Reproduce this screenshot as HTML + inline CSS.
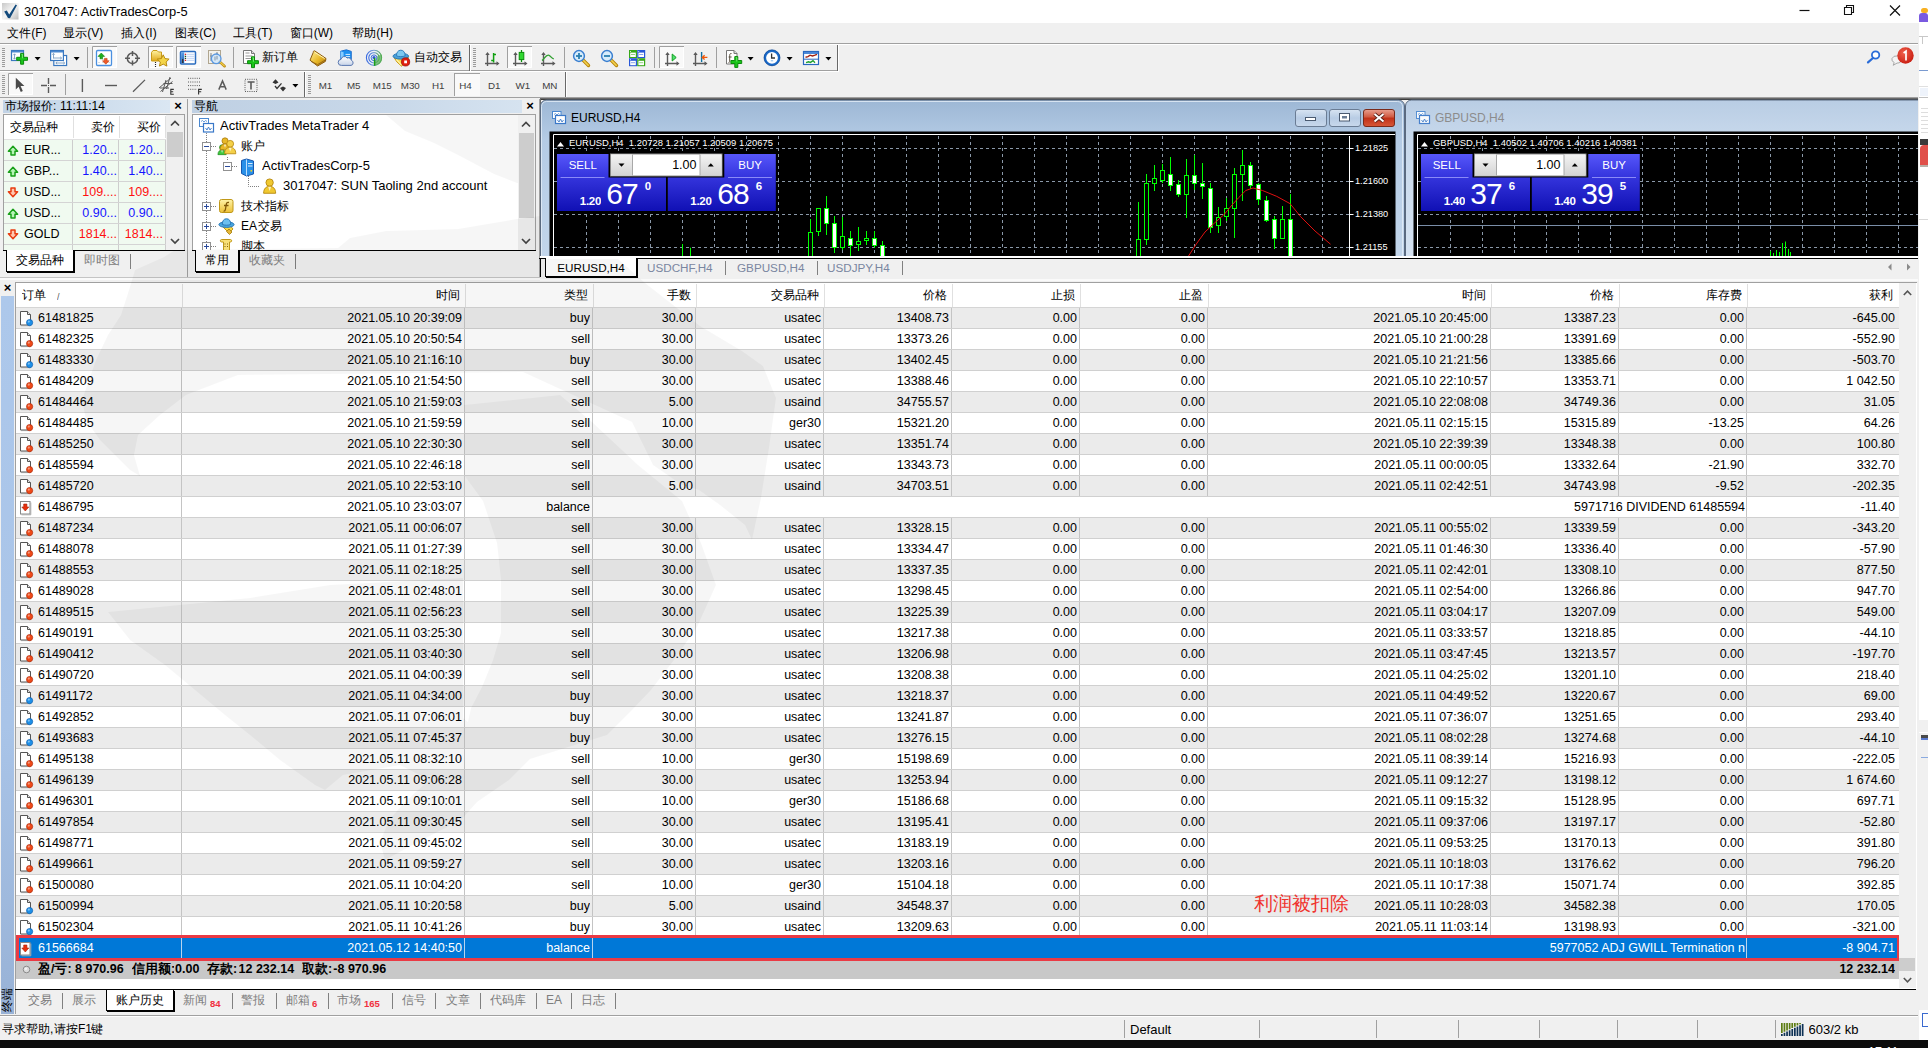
<!DOCTYPE html><html><head><meta charset="utf-8"><title>3017047: ActivTradesCorp-5</title><style>
html,body{margin:0;padding:0;}
body{width:1928px;height:1048px;overflow:hidden;background:#f0f0f0;position:relative;
 font-family:"Liberation Sans",sans-serif;font-size:12.5px;color:#000;}
div,svg{position:absolute;box-sizing:border-box;white-space:nowrap;overflow:hidden;}
svg{overflow:visible;}
.r{text-align:right;}
.c{text-align:center;}
.g{color:#7d7d7d;}
.w{color:#fff;}
.b{font-weight:bold;}
</style></head><body>
<div style="left:0px;top:0px;width:1919px;height:23px;background:#fff;"></div>
<svg style="left:2px;top:3px;" width="17" height="17" viewBox="0 0 17 17"><defs><linearGradient id="ig" x1="0" y1="0" x2="1" y2="1"><stop offset="0" stop-color="#c9c9c9"/><stop offset=".5" stop-color="#f4f4f4"/><stop offset="1" stop-color="#bdbdbd"/></linearGradient></defs><rect x="0" y="0" width="16.5" height="16.5" fill="url(#ig)"/><path d="M2.2 8.6l2.6-1.2 2.4 4.2L13.6 1.6l1.4.6L8 15.2 6 15z" fill="#134a7c"/></svg>
<div style="left:24px;top:1px;width:400px;height:21px;line-height:21px;font-size:12.9px;">3017047: ActivTradesCorp-5</div>
<svg style="left:1795px;top:0px;" width="120" height="23" viewBox="0 0 120 23"><path d="M4.5 10.5h10" stroke="#111" stroke-width="1.2"/><path d="M49.5 7.5h7v7h-7zM51.5 7.5v-2h7v7h-2" fill="none" stroke="#111" stroke-width="1.1"/><path d="M95 5.5l10 10M105 5.5l-10 10" stroke="#111" stroke-width="1.2"/></svg>
<div style="left:0px;top:23px;width:1919px;height:20px;background:#f0f0f0;"></div>
<div style="left:7px;top:23px;width:24px;height:20px;line-height:20px;font-size:12px;">文件</div>
<div style="left:31.3px;top:23px;width:30px;height:20px;line-height:20px;font-size:12px;">(F)</div>
<div style="left:63px;top:23px;width:24px;height:20px;line-height:20px;font-size:12px;">显示</div>
<div style="left:87.3px;top:23px;width:30px;height:20px;line-height:20px;font-size:12px;">(V)</div>
<div style="left:121px;top:23px;width:24px;height:20px;line-height:20px;font-size:12px;">插入</div>
<div style="left:145.3px;top:23px;width:30px;height:20px;line-height:20px;font-size:12px;">(I)</div>
<div style="left:175px;top:23px;width:24px;height:20px;line-height:20px;font-size:12px;">图表</div>
<div style="left:199.3px;top:23px;width:30px;height:20px;line-height:20px;font-size:12px;">(C)</div>
<div style="left:233px;top:23px;width:24px;height:20px;line-height:20px;font-size:12px;">工具</div>
<div style="left:257.3px;top:23px;width:30px;height:20px;line-height:20px;font-size:12px;">(T)</div>
<div style="left:289.5px;top:23px;width:24px;height:20px;line-height:20px;font-size:12px;">窗口</div>
<div style="left:313.8px;top:23px;width:30px;height:20px;line-height:20px;font-size:12px;">(W)</div>
<div style="left:352px;top:23px;width:24px;height:20px;line-height:20px;font-size:12px;">帮助</div>
<div style="left:376.3px;top:23px;width:30px;height:20px;line-height:20px;font-size:12px;">(H)</div>
<div style="left:0px;top:43px;width:1919px;height:1px;background:#a0a0a0;"></div>
<div style="left:0px;top:44px;width:1919px;height:1px;background:#fff;"></div>
<div style="left:0px;top:70px;width:838px;height:1px;background:#a0a0a0;"></div>
<div style="left:0px;top:71px;width:838px;height:1px;background:#fff;"></div>
<div style="left:469px;top:45px;width:1px;height:26px;background:#696969;"></div>
<div style="left:470px;top:45px;width:1px;height:26px;background:#fff;"></div>
<div style="left:837px;top:45px;width:1px;height:26px;background:#696969;"></div>
<div style="left:838px;top:45px;width:1px;height:27px;background:#fff;"></div>
<div style="left:0px;top:97px;width:1919px;height:1px;background:#a0a0a0;"></div>
<div style="left:304px;top:72px;width:1px;height:25px;background:#696969;"></div>
<div style="left:305px;top:72px;width:1px;height:25px;background:#fff;"></div>
<div style="left:565px;top:72px;width:1px;height:25px;background:#696969;"></div>
<div style="left:566px;top:72px;width:1px;height:25px;background:#fff;"></div>
<svg style="left:0px;top:0px;" width="1928" height="100" viewBox="0 0 1928 100"><defs><linearGradient id="gold" x1="0" y1="0" x2="0" y2="1"><stop offset="0" stop-color="#fff3a0"/><stop offset="1" stop-color="#e0a818"/></linearGradient><linearGradient id="blu" x1="0" y1="0" x2="0" y2="1"><stop offset="0" stop-color="#5aa0e8"/><stop offset="1" stop-color="#1c5cb0"/></linearGradient></defs><rect x="2" y="48" width="3" height="1" fill="#9a9a9a"/><rect x="2" y="50" width="3" height="1" fill="#9a9a9a"/><rect x="2" y="52" width="3" height="1" fill="#9a9a9a"/><rect x="2" y="54" width="3" height="1" fill="#9a9a9a"/><rect x="2" y="56" width="3" height="1" fill="#9a9a9a"/><rect x="2" y="58" width="3" height="1" fill="#9a9a9a"/><rect x="2" y="60" width="3" height="1" fill="#9a9a9a"/><rect x="2" y="62" width="3" height="1" fill="#9a9a9a"/><rect x="2" y="64" width="3" height="1" fill="#9a9a9a"/><rect x="2" y="66" width="3" height="1" fill="#9a9a9a"/><rect x="11.5" y="50.5" width="12" height="10" fill="#fff" stroke="#3a78c0" stroke-width="1.2"/><rect x="12" y="51" width="11" height="1.5" fill="#4a88d0"/><path d="M14.5 54v5M13.3 55.2l1.2-1.4 1.2 1.4M13.3 57.8l1.2 1.4 1.2-1.4" stroke="#7a9cc0" stroke-width=".9" fill="none"/><path d="M20.6 53.4h3.0v3.9000000000000004h3.9000000000000004v3.0h-3.9000000000000004v3.9000000000000004h-3.0v-3.9000000000000004h-3.9000000000000004v-3.0h3.9000000000000004z" fill="#19c519" stroke="#0a8a0a" stroke-width="1"/><path d="M21.6 54.4h1.0v3.9000000000000004" fill="none" stroke="#8cf08c" stroke-width="1" opacity=".8"/><path d="M34.6 57h6l-3 3.4z" fill="#000"/><rect x="53.8" y="55.5" width="12.8" height="10" fill="#fff" stroke="#3a78c0" stroke-width="1.2"/><rect x="50.6" y="50.5" width="12.8" height="10" fill="#fff" stroke="#3a78c0" stroke-width="1.2"/><rect x="51" y="51" width="12" height="1.5" fill="#4a88d0"/><path d="M53.5 53.5v5M52.3 54.7l1.2-1.4 1.2 1.4M53.5 58h8M60.2 56.8l1.4 1.2-1.4 1.2M56 63h8.5M57.2 61.8L55.8 63l1.4 1.2M63.3 61.8l1.4 1.2-1.4 1.2" stroke="#7a9cc0" stroke-width=".9" fill="none"/><path d="M73.6 57h6l-3 3.4z" fill="#000"/><rect x="87" y="47" width="1" height="21" fill="#a0a0a0"/><rect x="92" y="46" width="25" height="22" fill="#f9f9f9"/><path d="M92.5 68V46.5H117" fill="none" stroke="#a0a0a0" stroke-width="1"/><path d="M116.5 47V67.5H93" fill="none" stroke="#fff" stroke-width="1"/><rect x="96.5" y="50.5" width="15" height="15" rx="1.2" fill="#fff" stroke="#4a90e0" stroke-width="1.3"/><path d="M102 62.5h8M102 59.5h2M98 62.5h2" stroke="#ddd" stroke-width="1"/><path d="M101.3 53l3.3 3.4h-2v2.4h-2.6v-2.4h-2z" fill="#1eb01e" stroke="#0c800c" stroke-width=".6"/><path d="M105.8 64.2l-3.3-3.4h2v-2.4h2.6v2.4h2z" fill="#f05a28" stroke="#c03c10" stroke-width=".6"/><circle cx="132.5" cy="58.3" r="5.2" fill="none" stroke="#5a5a5a" stroke-width="1.5"/><path d="M132.5 51v5M132.5 60.6v5M125 58.3h5M135 58.3h5" stroke="#5a5a5a" stroke-width="1.5"/><rect x="148" y="46" width="25" height="22" fill="#f9f9f9"/><path d="M148.5 68V46.5H173" fill="none" stroke="#a0a0a0" stroke-width="1"/><path d="M172.5 47V67.5H149" fill="none" stroke="#fff" stroke-width="1"/><path d="M151.5 52.5l1.5-2h4l1.5 1.5h3v9h-10z" fill="url(#gold)" stroke="#c89a18" stroke-width="1"/><path d="M155.5 62v1M155.5 64v1M155.5 66v1" stroke="#222" stroke-width="1.1"/><path d="M163.2 54.8l1.8 3.8 4.1.5-3 2.9.8 4.1-3.7-2-3.7 2 .8-4.1-3-2.9 4.1-.5z" fill="#f4d548" stroke="#b88a10" stroke-width="1"/><rect x="176" y="46" width="25" height="22" fill="#f9f9f9"/><path d="M176.5 68V46.5H201" fill="none" stroke="#a0a0a0" stroke-width="1"/><path d="M200.5 47V67.5H177" fill="none" stroke="#fff" stroke-width="1"/><rect x="180.5" y="51.5" width="15" height="12.5" rx="1" fill="#fff" stroke="#2a6cc0" stroke-width="1.5"/><rect x="181.2" y="52.2" width="3" height="11" fill="url(#blu)"/><rect x="182" y="59" width="1.3" height="4" fill="#333"/><path d="M186.5 54.3h8M186.5 56.3h8M186.5 58.3h8M186.5 60.3h8" stroke="#bcd2f4" stroke-width="1"/><rect x="184.8" y="53.7" width="1.3" height="1.3" fill="#e02020"/><rect x="184.8" y="55.7" width="1.3" height="1.3" fill="#205020"/><rect x="184.8" y="57.7" width="1.3" height="1.3" fill="#205020"/><rect x="184.8" y="59.7" width="1.3" height="1.3" fill="#e02020"/><rect x="208.5" y="50.5" width="12" height="13" fill="#f4f2ec" stroke="#b0a690" stroke-width="1"/><path d="M211 53v8M217 52v7M210 56h2M216 54h2" stroke="#808890" stroke-width="1"/><path d="M219.6 61.6l5 4.6" stroke="#b8860b" stroke-width="2.6" stroke-linecap="round"/><path d="M220 62l4.4 4" stroke="#f0cc4a" stroke-width="1.1" stroke-linecap="round"/><circle cx="216.2" cy="58.8" r="4.8" fill="#cfe6fa" fill-opacity=".85" stroke="#5a98e0" stroke-width="1.3"/><path d="M215 56.5v4M217 56v3.5" stroke="#9ab" stroke-width="1.3"/><rect x="233" y="47" width="1" height="21" fill="#a0a0a0"/><path d="M243.5 50.5h8l3 3v10h-11z" fill="#fff" stroke="#777" stroke-width="1"/><path d="M251.5 50.5v3h3" fill="#ddd" stroke="#777" stroke-width="1"/><path d="M245.5 53h4M245.5 56h7M245.5 58.5h7" stroke="#999" stroke-width="1.1"/><path d="M251.5 56.800000000000004h3.0v3.9000000000000004h3.9000000000000004v3.0h-3.9000000000000004v3.9000000000000004h-3.0v-3.9000000000000004h-3.9000000000000004v-3.0h3.9000000000000004z" fill="#19c519" stroke="#0a8a0a" stroke-width="1"/><path d="M252.5 57.800000000000004h1.0v3.9000000000000004" fill="none" stroke="#8cf08c" stroke-width="1" opacity=".8"/><defs><linearGradient id="bk" x1="0" y1="0" x2="1" y2="1"><stop offset="0" stop-color="#fff2a0"/><stop offset=".55" stop-color="#e8b828"/><stop offset="1" stop-color="#b07808"/></linearGradient><linearGradient id="sg" x1="0" y1="0" x2="1" y2="0"><stop offset="0" stop-color="#3a6ae0"/><stop offset=".5" stop-color="#7aa0d8"/><stop offset="1" stop-color="#48a848"/></linearGradient><linearGradient id="cl" x1="0" y1="0" x2="0" y2="1"><stop offset="0" stop-color="#ffffff"/><stop offset="1" stop-color="#c8d4e8"/></linearGradient></defs><path d="M314.6 50.8c-1.200 0-1.600 1-1.400 1.800L310 60.200l7.600 5.800 7.800-4.600.6-2.900z" fill="url(#bk)" stroke="#8a5a10" stroke-width="1"/><path d="M311 61.400l6.600 3.200 7.400-4.400" fill="none" stroke="#8a5a10" stroke-width=".8"/><path d="M315 52.500l9.600 6" fill="none" stroke="#fff6c0" stroke-width="1"/><path d="M340.600 51.200l5.800-1.400 4.900 1.600v8.200h-10.700z" fill="#1e90f0" stroke="#1868c8" stroke-width=".9"/><path d="M340.600 51.200l3 1v7.400h-3z" fill="#86ccff"/><path d="M345.500 54.400h4.600M345.500 56.600h4.600" stroke="#d8efff" stroke-width="1"/><path d="M341.400 65.400a3 3 0 0 1-.4-6 3.400 3.400 0 0 1 6.200-1.300 3 3 0 0 1 4.200 2.300 2.600 2.600 0 0 1-.4 5z" fill="url(#cl)" stroke="#5a78b0" stroke-width="1"/><circle cx="374" cy="57.800" r="7.600" fill="#eef2f8" fill-opacity=".7" stroke="url(#sg)" stroke-width="1.100"/><circle cx="374" cy="57.800" r="5.200" fill="none" stroke="url(#sg)" stroke-width="1.100"/><path d="M374.600 57.800L381 54.500a7.600 7.600 0 0 1-6.400 11.200z" fill="#58b058" fill-opacity=".75"/><circle cx="374" cy="57.800" r="2.900" fill="#dfe8f6" stroke="#4a78d8" stroke-width="1"/><circle cx="374" cy="57.600" r="1.500" fill="#2a58d0"/><path d="M374.600 58v7.800" stroke="#18a018" stroke-width="1.500"/><path d="M394 57.500h14.500l-2.500 4.500-4.500 4.200-4.500-4.200z" fill="#f8d848" stroke="#c89818" stroke-width="1"/><path d="M396.500 59.500l5 5.500" stroke="#fff4a8" stroke-width="1.200"/><ellipse cx="400.800" cy="56.200" rx="7.800" ry="2.900" fill="#4aa0d8" stroke="#2878b8" stroke-width="1"/><path d="M396.400 55.800c.2-3.200 1.400-5.600 4.400-5.600s4.200 2.400 4.400 5.600c-2.300 1.100-6.500 1.100-8.800 0z" fill="#7cc8f0" stroke="#2878b8" stroke-width=".9"/><circle cx="405.600" cy="61.900" r="4.100" fill="#e02010" stroke="#a01008" stroke-width=".8"/><rect x="404.200" y="60.500" width="2.800" height="2.800" fill="#fff"/><rect x="473" y="48" width="3" height="1" fill="#9a9a9a"/><rect x="473" y="50" width="3" height="1" fill="#9a9a9a"/><rect x="473" y="52" width="3" height="1" fill="#9a9a9a"/><rect x="473" y="54" width="3" height="1" fill="#9a9a9a"/><rect x="473" y="56" width="3" height="1" fill="#9a9a9a"/><rect x="473" y="58" width="3" height="1" fill="#9a9a9a"/><rect x="473" y="60" width="3" height="1" fill="#9a9a9a"/><rect x="473" y="62" width="3" height="1" fill="#9a9a9a"/><rect x="473" y="64" width="3" height="1" fill="#9a9a9a"/><rect x="473" y="66" width="3" height="1" fill="#9a9a9a"/><path d="M487.5 66V53.5M485 63.5H498" stroke="#5a5a5a" stroke-width="1.4" fill="none"/><path d="M487.5 52l-2.2 3h4.4zM499.5 63.5l-3-2.2v4.4z" fill="#5a5a5a"/><path d="M493.6 53v9.400M493.600 54.400h2.400M491.200 60.600h2.400" stroke="#10a010" stroke-width="1.5" fill="none"/><rect x="507" y="46" width="25" height="22" fill="#f9f9f9"/><path d="M507.5 68V46.5H532" fill="none" stroke="#a0a0a0" stroke-width="1"/><path d="M531.5 47V67.5H508" fill="none" stroke="#fff" stroke-width="1"/><path d="M515.5 66V53.5M513 63.5H526" stroke="#5a5a5a" stroke-width="1.4" fill="none"/><path d="M515.5 52l-2.2 3h4.4zM527.5 63.5l-3-2.2v4.4z" fill="#5a5a5a"/><path d="M521.5 50v12" stroke="#0a900a" stroke-width="1.3"/><rect x="519.2" y="52.4" width="4.600" height="7.200" fill="#30d830" stroke="#0a900a" stroke-width="1"/><path d="M543.5 66V53.5M541 63.5H554" stroke="#5a5a5a" stroke-width="1.4" fill="none"/><path d="M543.5 52l-2.2 3h4.4zM555.5 63.5l-3-2.2v4.4z" fill="#5a5a5a"/><path d="M542 60.500c2-1 3.600-5.600 6.400-5.400 2 .2 3 3.400 5.400 3.800" stroke="#30a030" stroke-width="1.400" fill="none"/><rect x="564" y="47" width="1" height="21" fill="#a0a0a0"/><path d="M582.5 59.5l6 6" stroke="#b8860b" stroke-width="3.4" stroke-linecap="round"/><path d="M582.8 59.8l5.4 5.4" stroke="#f3d250" stroke-width="1.6" stroke-linecap="round"/><circle cx="579" cy="56" r="5.4" fill="#d7ecfb" stroke="#3a7fd0" stroke-width="1.5"/><path d="M576 56h6" stroke="#2a7fb0" stroke-width="1.8"/><path d="M579 53v6" stroke="#2a7fb0" stroke-width="1.8"/><path d="M610.5 59.5l6 6" stroke="#b8860b" stroke-width="3.4" stroke-linecap="round"/><path d="M610.8 59.8l5.4 5.4" stroke="#f3d250" stroke-width="1.6" stroke-linecap="round"/><circle cx="607" cy="56" r="5.4" fill="#d7ecfb" stroke="#3a7fd0" stroke-width="1.5"/><path d="M604 56h6" stroke="#2a7fb0" stroke-width="1.8"/><rect x="629" y="50" width="8" height="8" fill="#38a818"/><rect x="630.2" y="52.6" width="5.600" height="4.400" fill="#fff"/><rect x="631" y="54" width="4" height="1" fill="#38a818" opacity=".55"/><rect x="630" y="51" width="1" height="1" fill="#fff" opacity=".8"/><rect x="637.2" y="50" width="8" height="8" fill="#2858d8"/><rect x="638.4000000000001" y="52.6" width="5.600" height="4.400" fill="#fff"/><rect x="639.2" y="54" width="4" height="1" fill="#2858d8" opacity=".55"/><rect x="638.2" y="51" width="1" height="1" fill="#fff" opacity=".8"/><rect x="629" y="58.2" width="8" height="8" fill="#2858d8"/><rect x="630.2" y="60.800000000000004" width="5.600" height="4.400" fill="#fff"/><rect x="631" y="62.2" width="4" height="1" fill="#2858d8" opacity=".55"/><rect x="630" y="59.2" width="1" height="1" fill="#fff" opacity=".8"/><rect x="637.2" y="58.2" width="8" height="8" fill="#38a818"/><rect x="638.4000000000001" y="60.800000000000004" width="5.600" height="4.400" fill="#fff"/><rect x="639.2" y="62.2" width="4" height="1" fill="#38a818" opacity=".55"/><rect x="638.2" y="59.2" width="1" height="1" fill="#fff" opacity=".8"/><rect x="654" y="47" width="1" height="21" fill="#a0a0a0"/><rect x="659" y="46" width="25" height="22" fill="#f9f9f9"/><path d="M659.5 68V46.5H684" fill="none" stroke="#a0a0a0" stroke-width="1"/><path d="M683.5 47V67.5H660" fill="none" stroke="#fff" stroke-width="1"/><path d="M667.5 66V53.5M665 63.5H678" stroke="#5a5a5a" stroke-width="1.4" fill="none"/><path d="M667.5 52l-2.2 3h4.4zM679.5 63.5l-3-2.2v4.4z" fill="#5a5a5a"/><path d="M672.200 54v7l4-3.500z" fill="#50e070" stroke="#10a020" stroke-width="1"/><path d="M695.5 66V53.5M693 63.5H706" stroke="#5a5a5a" stroke-width="1.4" fill="none"/><path d="M695.5 52l-2.2 3h4.4zM707.5 63.5l-3-2.2v4.4z" fill="#5a5a5a"/><path d="M701.600 52v10" stroke="#1070a0" stroke-width="1.400"/><path d="M707.400 57.400h-5M704.600 55.200l-2.400 2.200 2.400 2.200" stroke="#f05808" stroke-width="1.300" fill="none"/><rect x="716" y="47" width="1" height="21" fill="#a0a0a0"/><path d="M726.500 50.500h7.500l3 3v10.500h-10.500z" fill="#fff" stroke="#777" stroke-width="1"/><path d="M734 50.500v3h3" fill="#ddd" stroke="#777" stroke-width="1"/><path d="M731.500 53.500c-1.600-.2-1.800.8-1.800 2v5.500c0 1-.2 1.600-1.200 1.600M728.600 57h3" stroke="#5a5040" stroke-width="1" fill="none"/><path d="M734.8 56.6h3.0v3.9000000000000004h3.9000000000000004v3.0h-3.9000000000000004v3.9000000000000004h-3.0v-3.9000000000000004h-3.9000000000000004v-3.0h3.9000000000000004z" fill="#19c519" stroke="#0a8a0a" stroke-width="1"/><path d="M735.8 57.6h1.0v3.9000000000000004" fill="none" stroke="#8cf08c" stroke-width="1" opacity=".8"/><path d="M747.6 57h6l-3 3.4z" fill="#000"/><circle cx="772" cy="57.800" r="7" fill="#fff" stroke="#1868c8" stroke-width="2.200"/><circle cx="772" cy="57.800" r="8" fill="none" stroke="#0a408a" stroke-width=".6"/><path d="M771.600 53.600v4.400h3.400" stroke="#333" stroke-width="1.300" fill="none"/><path d="M770.800 60.800h2.400" stroke="#80b8f0" stroke-width="1"/><path d="M786.6 57h6l-3 3.4z" fill="#000"/><rect x="803.500" y="51.500" width="15" height="13" fill="#fff" stroke="#2a68c0" stroke-width="1.200"/><rect x="804" y="52" width="14" height="2" fill="#4a88d8"/><path d="M804 59.200h14" stroke="#2a68c0" stroke-width="1"/><path d="M805.500 57.200l2.500-.6 2-1.400 2.500.8 2.500-.8 2-.8" stroke="#a02010" stroke-width="1.400" fill="none"/><path d="M806 62.600l2.500-.800 2 .6 2.500-1.800 2 2.200" stroke="#20a030" stroke-width="1.400" fill="none"/><path d="M825.4 57h6l-3 3.4z" fill="#000"/><circle cx="1875.600" cy="55" r="3.700" fill="#fff" stroke="#2a6cd8" stroke-width="1.800"/><path d="M1873 58l-5 4.400" stroke="#2a6cd8" stroke-width="2.200" stroke-linecap="round"/><path d="M1892 58.500a5 3.600 0 1 1 5 4.600l-3.800 2.200 1-2.800a5 3.600 0 0 1-2.200-4z" fill="#f4f4f4" stroke="#a8a8a8" stroke-width="1"/><defs><radialGradient id="rb" cx=".4" cy=".35" r=".7"><stop offset="0" stop-color="#f0604c"/><stop offset="1" stop-color="#c81c10"/></radialGradient></defs><circle cx="1905.500" cy="55.500" r="8.200" fill="url(#rb)"/><path d="M1903.600 53l2.400-1.800v9.200" stroke="#fff" stroke-width="1.700" fill="none"/><rect x="2" y="75" width="3" height="1" fill="#9a9a9a"/><rect x="2" y="77" width="3" height="1" fill="#9a9a9a"/><rect x="2" y="79" width="3" height="1" fill="#9a9a9a"/><rect x="2" y="81" width="3" height="1" fill="#9a9a9a"/><rect x="2" y="83" width="3" height="1" fill="#9a9a9a"/><rect x="2" y="85" width="3" height="1" fill="#9a9a9a"/><rect x="2" y="87" width="3" height="1" fill="#9a9a9a"/><rect x="2" y="89" width="3" height="1" fill="#9a9a9a"/><rect x="2" y="91" width="3" height="1" fill="#9a9a9a"/><rect x="2" y="93" width="3" height="1" fill="#9a9a9a"/><rect x="8" y="73" width="25" height="22" fill="#f9f9f9"/><path d="M8.5 95V73.5H33" fill="none" stroke="#a0a0a0" stroke-width="1"/><path d="M32.5 74V94.5H9" fill="none" stroke="#fff" stroke-width="1"/><path d="M15.800 77.800v11.600l2.800-2.600 2.200 5.200 2-.9-2.200-5 3.800-.2z" fill="#4a4a4a"/><path d="M48.500 78v6M48.500 87v6M41 85.500h6M50 85.500h6" stroke="#5a5a5a" stroke-width="1.400"/><rect x="48" y="85" width="1" height="1" fill="#5a5a5a"/><rect x="65" y="74" width="1" height="21" fill="#a0a0a0"/><path d="M82.400 79v13" stroke="#5a5a5a" stroke-width="1.400"/><path d="M105 85.500h12" stroke="#5a5a5a" stroke-width="1.400"/><path d="M133 91.800L145 79.900" stroke="#5a5a5a" stroke-width="1.300"/><path d="M159 88l12-10M160.500 91.500l12-10M162.500 92l3.500-12M166.500 89l3.500-12M160 88h9M163.500 83.500h9" stroke="#5a5a5a" stroke-width="1" fill="none"/><path d="M173.800 89.400h-3v4.800h3M170.800 91.800h2.400" stroke="#333" stroke-width="1.100" fill="none"/><path d="M188 78.3h13" stroke="#5a5a5a" stroke-width="1" stroke-dasharray="1 1.200"/><path d="M188 82h13" stroke="#5a5a5a" stroke-width="1" stroke-dasharray="1 1.200"/><path d="M188 85.6h13" stroke="#5a5a5a" stroke-width="1" stroke-dasharray="1 1.200"/><path d="M188 89.3h9" stroke="#5a5a5a" stroke-width="1" stroke-dasharray="1 1.200"/><path d="M201.800 89.400h-3.200v5M198.600 91.800h2.600" stroke="#333" stroke-width="1.100" fill="none"/><path d="M218.800 89.600l3.700-8.600 3.700 8.600M220.200 86.800h4.600" stroke="#5a5a5a" stroke-width="1.500" fill="none"/><rect x="245" y="79.300" width="12" height="12.200" fill="none" stroke="#5a5a5a" stroke-width="1" stroke-dasharray="1 1.200"/><path d="M247.600 82h7M251 82v7.600" stroke="#5a5a5a" stroke-width="1.600" fill="none"/><path d="M272.500 82.500l3-3.200 3 3.200-3 1.600zM280 88l3-1.600 3 1.600-3 3.400z" fill="#333"/><path d="M275 86l2 2.400 4.500-5" stroke="#333" stroke-width="1.300" fill="none"/><path d="M292.4 84h6l-3 3.4z" fill="#000"/><rect x="308" y="75" width="3" height="1" fill="#9a9a9a"/><rect x="308" y="77" width="3" height="1" fill="#9a9a9a"/><rect x="308" y="79" width="3" height="1" fill="#9a9a9a"/><rect x="308" y="81" width="3" height="1" fill="#9a9a9a"/><rect x="308" y="83" width="3" height="1" fill="#9a9a9a"/><rect x="308" y="85" width="3" height="1" fill="#9a9a9a"/><rect x="308" y="87" width="3" height="1" fill="#9a9a9a"/><rect x="308" y="89" width="3" height="1" fill="#9a9a9a"/><rect x="308" y="91" width="3" height="1" fill="#9a9a9a"/><rect x="308" y="93" width="3" height="1" fill="#9a9a9a"/></svg>
<div style="left:262px;top:46px;width:60px;height:22px;line-height:22px;font-size:12px;">新订单</div>
<div style="left:414px;top:46px;width:60px;height:22px;line-height:22px;font-size:11.700px;">自动交易</div>
<div style="left:454px;top:73px;width:26px;height:23px;background:#f9f9f9;border-top:1px solid #a0a0a0;border-left:1px solid #a0a0a0;"></div>
<div style="left:309px;top:75px;width:33px;height:21px;line-height:21px;font-size:9.800px;color:#404040;text-align:center;">M1</div>
<div style="left:337px;top:75px;width:33.5px;height:21px;line-height:21px;font-size:9.800px;color:#404040;text-align:center;">M5</div>
<div style="left:363px;top:75px;width:38.5px;height:21px;line-height:21px;font-size:9.800px;color:#404040;text-align:center;">M15</div>
<div style="left:391px;top:75px;width:38.5px;height:21px;line-height:21px;font-size:9.800px;color:#404040;text-align:center;">M30</div>
<div style="left:422px;top:75px;width:32.6px;height:21px;line-height:21px;font-size:9.800px;color:#404040;text-align:center;">H1</div>
<div style="left:449px;top:75px;width:33px;height:21px;line-height:21px;font-size:9.800px;color:#404040;text-align:center;">H4</div>
<div style="left:478px;top:75px;width:32.6px;height:21px;line-height:21px;font-size:9.800px;color:#404040;text-align:center;">D1</div>
<div style="left:505px;top:75px;width:35.5px;height:21px;line-height:21px;font-size:9.800px;color:#404040;text-align:center;">W1</div>
<div style="left:532px;top:75px;width:35.5px;height:21px;line-height:21px;font-size:9.800px;color:#404040;text-align:center;">MN</div>
<div style="left:0px;top:99px;width:1919px;height:183px;background:#f0f0f0;"></div>
<div style="left:3px;top:100px;width:167px;height:13px;background:linear-gradient(90deg,#c2d3e6,#cfdeed 60%,#dbe7f3);"></div>
<div style="left:5px;top:99px;width:52px;height:14px;line-height:14px;font-size:12px;">市场报价:</div>
<div style="left:60px;top:99px;width:60px;height:14px;line-height:14px;font-size:12px;">11:11:14</div>
<div style="left:171px;top:98px;width:14px;height:15px;line-height:15px;font-size:13px;font-weight:bold;text-align:center;">×</div>
<div style="left:187px;top:99px;width:1px;height:180px;background:#a0a0a0;"></div>
<div style="left:3px;top:114px;width:182px;height:137px;background:#fff;border:1px solid #a0a0a0;border-bottom:none;"></div>
<div style="left:4px;top:115px;width:162px;height:25px;background:#fff;border-bottom:1px solid #e0e0e0;"></div>
<div style="left:10px;top:116px;width:60px;height:22px;line-height:22px;font-size:12px;">交易品种</div>
<div class="r" style="left:74px;top:116px;width:41px;height:22px;line-height:22px;font-size:12px;">卖价</div>
<div class="r" style="left:120px;top:116px;width:41px;height:22px;line-height:22px;font-size:12px;">买价</div>
<div style="left:73px;top:116px;width:1px;height:22px;background:#e0e0e0;"></div>
<div style="left:119px;top:116px;width:1px;height:22px;background:#e0e0e0;"></div>
<div style="left:165px;top:116px;width:1px;height:22px;background:#e0e0e0;"></div>
<div style="left:4px;top:140px;width:162px;height:21px;background:#f0faf0;border-bottom:1px solid #d4d4d4;"></div>
<div style="left:24px;top:140px;width:48px;height:20px;line-height:20px;font-size:12.500px;">EUR...</div>
<div class="r" style="left:74px;top:140px;width:43px;height:20px;line-height:20px;font-size:12.500px;color:#1414ff;">1.20...</div>
<div class="r" style="left:120px;top:140px;width:43px;height:20px;line-height:20px;font-size:12.500px;color:#1414ff;">1.20...</div>
<div style="left:72px;top:140px;width:1px;height:20px;background:#cdcdcd;"></div>
<div style="left:118px;top:140px;width:1px;height:20px;background:#cdcdcd;"></div>
<div style="left:165px;top:140px;width:1px;height:20px;background:#cdcdcd;"></div>
<div style="left:4px;top:161px;width:162px;height:21px;background:#f0faf0;border-bottom:1px solid #d4d4d4;"></div>
<div style="left:24px;top:161px;width:48px;height:20px;line-height:20px;font-size:12.500px;">GBP...</div>
<div class="r" style="left:74px;top:161px;width:43px;height:20px;line-height:20px;font-size:12.500px;color:#1414ff;">1.40...</div>
<div class="r" style="left:120px;top:161px;width:43px;height:20px;line-height:20px;font-size:12.500px;color:#1414ff;">1.40...</div>
<div style="left:72px;top:161px;width:1px;height:20px;background:#cdcdcd;"></div>
<div style="left:118px;top:161px;width:1px;height:20px;background:#cdcdcd;"></div>
<div style="left:165px;top:161px;width:1px;height:20px;background:#cdcdcd;"></div>
<div style="left:4px;top:182px;width:162px;height:21px;background:#f0faf0;border-bottom:1px solid #d4d4d4;"></div>
<div style="left:24px;top:182px;width:48px;height:20px;line-height:20px;font-size:12.500px;">USD...</div>
<div class="r" style="left:74px;top:182px;width:43px;height:20px;line-height:20px;font-size:12.500px;color:#ff1010;">109....</div>
<div class="r" style="left:120px;top:182px;width:43px;height:20px;line-height:20px;font-size:12.500px;color:#ff1010;">109....</div>
<div style="left:72px;top:182px;width:1px;height:20px;background:#cdcdcd;"></div>
<div style="left:118px;top:182px;width:1px;height:20px;background:#cdcdcd;"></div>
<div style="left:165px;top:182px;width:1px;height:20px;background:#cdcdcd;"></div>
<div style="left:4px;top:203px;width:162px;height:21px;background:#f0faf0;border-bottom:1px solid #d4d4d4;"></div>
<div style="left:24px;top:203px;width:48px;height:20px;line-height:20px;font-size:12.500px;">USD...</div>
<div class="r" style="left:74px;top:203px;width:43px;height:20px;line-height:20px;font-size:12.500px;color:#1414ff;">0.90...</div>
<div class="r" style="left:120px;top:203px;width:43px;height:20px;line-height:20px;font-size:12.500px;color:#1414ff;">0.90...</div>
<div style="left:72px;top:203px;width:1px;height:20px;background:#cdcdcd;"></div>
<div style="left:118px;top:203px;width:1px;height:20px;background:#cdcdcd;"></div>
<div style="left:165px;top:203px;width:1px;height:20px;background:#cdcdcd;"></div>
<div style="left:4px;top:224px;width:162px;height:21px;background:#f0faf0;border-bottom:1px solid #d4d4d4;"></div>
<div style="left:24px;top:224px;width:48px;height:20px;line-height:20px;font-size:12.500px;">GOLD</div>
<div class="r" style="left:74px;top:224px;width:43px;height:20px;line-height:20px;font-size:12.500px;color:#ff1010;">1814...</div>
<div class="r" style="left:120px;top:224px;width:43px;height:20px;line-height:20px;font-size:12.500px;color:#ff1010;">1814...</div>
<div style="left:72px;top:224px;width:1px;height:20px;background:#cdcdcd;"></div>
<div style="left:118px;top:224px;width:1px;height:20px;background:#cdcdcd;"></div>
<div style="left:165px;top:224px;width:1px;height:20px;background:#cdcdcd;"></div>
<div style="left:4px;top:245px;width:162px;height:5px;background:#f0faf0;"></div>
<div style="left:72px;top:245px;width:1px;height:5px;background:#cdcdcd;"></div>
<div style="left:118px;top:245px;width:1px;height:5px;background:#cdcdcd;"></div>
<div style="left:165px;top:245px;width:1px;height:5px;background:#cdcdcd;"></div>
<div style="left:166px;top:115px;width:18px;height:135px;background:#f0f0f0;"></div>
<div style="left:167px;top:132px;width:16px;height:25px;background:#cdcdcd;"></div>
<svg style="left:0px;top:0px;" width="190" height="260" viewBox="0 0 190 260"><path d="M13 146.3l4.600 5h-2.600v3.700h-4v-3.700h-2.600z" fill="#b8f4b8" stroke="#18a018" stroke-width="1.500" stroke-linejoin="round"/><path d="M13 167.3l4.600 5h-2.600v3.700h-4v-3.700h-2.600z" fill="#b8f4b8" stroke="#18a018" stroke-width="1.500" stroke-linejoin="round"/><path d="M13 196.7l4.600-5h-2.600v-3.700h-4v3.700h-2.600z" fill="#ffc8b0" stroke="#e83c10" stroke-width="1.500" stroke-linejoin="round"/><path d="M13 209.3l4.600 5h-2.600v3.700h-4v-3.700h-2.600z" fill="#b8f4b8" stroke="#18a018" stroke-width="1.500" stroke-linejoin="round"/><path d="M13 238.7l4.600-5h-2.600v-3.700h-4v3.700h-2.600z" fill="#ffc8b0" stroke="#e83c10" stroke-width="1.500" stroke-linejoin="round"/><path d="M171 125.5l4-4 4 4" fill="none" stroke="#444" stroke-width="1.700"/><path d="M171 239l4 4 4-4" fill="none" stroke="#444" stroke-width="1.700"/></svg>
<div style="left:3px;top:250px;width:182px;height:1px;background:#000;"></div>
<div style="left:6px;top:250px;width:68px;height:22px;background:#fff;border:1px solid #000;border-top:none;box-shadow:1px 1px 0 #000;"></div>
<div style="left:6px;top:250px;width:68px;height:21px;line-height:21px;font-size:12px;text-align:center;">交易品种</div>
<div style="left:84px;top:250px;width:40px;height:21px;line-height:21px;font-size:12px;color:#808080;">即时图</div>
<div style="left:130px;top:254px;width:1px;height:15px;background:#808080;"></div>
<div style="left:192px;top:100px;width:330px;height:13px;background:linear-gradient(90deg,#bfd0e3,#c8d8e9 60%,#d6e3f0);"></div>
<div style="left:194px;top:99px;width:60px;height:14px;line-height:14px;font-size:12px;">导航</div>
<div style="left:523px;top:98px;width:14px;height:15px;line-height:15px;font-size:13px;font-weight:bold;text-align:center;">×</div>
<div style="left:192px;top:114px;width:344px;height:137px;background:#fff;border:1px solid #a0a0a0;border-bottom:none;"></div>
<div style="left:518px;top:115px;width:17px;height:135px;background:#f0f0f0;"></div>
<div style="left:519px;top:133px;width:15px;height:85px;background:#cdcdcd;"></div>
<div style="left:539px;top:99px;width:1px;height:180px;background:#a0a0a0;"></div>
<svg style="left:0px;top:0px;clip-path:inset(0 0 0 0);" width="545" height="250" viewBox="0 0 545 250"><path d="M522 126.5l4-4 4 4" fill="none" stroke="#444" stroke-width="1.700"/><path d="M522 239l4 4 4-4" fill="none" stroke="#444" stroke-width="1.700"/><path d="M206.500 133v120M211 146.500h6M211 206.500h6M211 226.500h6M211 246.500h6M227.500 157v4M232 166.500h6M248.500 176v10.500h11" stroke="#808080" stroke-width="1" stroke-dasharray="1 1" fill="none"/><rect x="202.5" y="142.5" width="8" height="8" fill="#fff" stroke="#919191" stroke-width="1"/><path d="M204 146.5h5" stroke="#2a4a9a" stroke-width="1"/><rect x="223.5" y="162.5" width="8" height="8" fill="#fff" stroke="#919191" stroke-width="1"/><path d="M225 166.5h5" stroke="#2a4a9a" stroke-width="1"/><rect x="202.5" y="202.5" width="8" height="8" fill="#fff" stroke="#919191" stroke-width="1"/><path d="M204 206.5h5" stroke="#2a4a9a" stroke-width="1"/><path d="M206.5 204v5" stroke="#2a4a9a" stroke-width="1"/><rect x="202.5" y="222.5" width="8" height="8" fill="#fff" stroke="#919191" stroke-width="1"/><path d="M204 226.5h5" stroke="#2a4a9a" stroke-width="1"/><path d="M206.5 224v5" stroke="#2a4a9a" stroke-width="1"/><rect x="202.5" y="242.5" width="8" height="8" fill="#fff" stroke="#919191" stroke-width="1"/><path d="M204 246.5h5" stroke="#2a4a9a" stroke-width="1"/><path d="M206.5 244v5" stroke="#2a4a9a" stroke-width="1"/><rect x="199.500" y="118.500" width="9" height="8" fill="#fff" stroke="#4a88d0" stroke-width="1"/><path d="M201 121.500l1.500-1 1.500 1.500 1.500-1.500 1.500 1" stroke="#4a88d0" stroke-width=".8" fill="none"/><rect x="203.500" y="123.500" width="10" height="8.500" fill="#fff" stroke="#3a78c8" stroke-width="1.200"/><path d="M205.500 128l1.500 2 1.500-3 1.500 3 1.500-2" stroke="#3a78c8" stroke-width=".9" fill="none"/><g transform="translate(217.5 144.5) scale(0.7)"><circle cx="6.500" cy="4" r="3.600" fill="#40c840" stroke="#108010" stroke-width=".9"/><path d="M.6 14.500c0-4.500 2.400-6.800 5.900-6.800s5.900 2.300 5.900 6.800z" fill="#40c840" stroke="#108010" stroke-width=".9"/><path d="M5 8.200l1.500 4 1.500-4" fill="#fff" opacity=".7"/></g><g transform="translate(219.5 137.5) scale(0.85)"><circle cx="6.500" cy="4" r="3.600" fill="#e8b828" stroke="#a87808" stroke-width=".9"/><path d="M.6 14.500c0-4.500 2.400-6.800 5.900-6.800s5.900 2.300 5.900 6.800z" fill="#e8b828" stroke="#a87808" stroke-width=".9"/><path d="M5 8.200l1.500 4 1.500-4" fill="#fff" opacity=".7"/></g><g transform="translate(224 140) scale(0.95)"><circle cx="6.500" cy="4" r="3.600" fill="#f4d048" stroke="#b88a10" stroke-width=".9"/><path d="M.6 14.500c0-4.500 2.400-6.800 5.900-6.800s5.900 2.300 5.900 6.800z" fill="#f4d048" stroke="#b88a10" stroke-width=".9"/><path d="M5 8.200l1.500 4 1.500-4" fill="#fff" opacity=".7"/></g><path d="M241.500 160.500l5-1.500 7 2v13l-7 2-5-2.500z" fill="#2a90e8" stroke="#1858b0" stroke-width="1"/><path d="M246.500 159.500v16" stroke="#bfe0ff" stroke-width="1"/><path d="M248 163.500h4.500M248 166h4.500" stroke="#d8ecff" stroke-width="1"/><rect x="250.500" y="170" width="1.600" height="1.600" fill="#f0d020"/><g transform="translate(263 178.5) scale(1.02)"><circle cx="6.500" cy="4" r="3.600" fill="#f0c830" stroke="#b88a10" stroke-width=".9"/><path d="M.6 14.500c0-4.500 2.400-6.800 5.900-6.800s5.900 2.300 5.900 6.800z" fill="#f0c830" stroke="#b88a10" stroke-width=".9"/><path d="M5 8.200l1.500 4 1.500-4" fill="#fff" opacity=".7"/></g><defs><linearGradient id="fy" x1="0" y1="0" x2="0" y2="1"><stop offset="0" stop-color="#fff4a8"/><stop offset="1" stop-color="#ecc038"/></linearGradient></defs><rect x="219.500" y="199.500" width="13.500" height="13" rx="2" fill="url(#fy)" stroke="#c09818" stroke-width="1"/><path d="M229 202.500c-2.200-.6-2.600.8-2.800 2.400l-.8 4.600c-.2 1.200-.6 1.800-1.800 1.600M224 205.500h4.500" stroke="#805808" stroke-width="1.300" fill="none"/><path d="M222 226l7 7 4-4-3-3.500z" fill="#f8d848" stroke="#c09818" stroke-width="1"/><path d="M226.500 231.500l3 3 2.500-2.500-3-3z" fill="#e8b838" stroke="#a07808" stroke-width=".8"/><ellipse cx="226.5" cy="224.6" rx="7.6" ry="2.8" fill="#4aa8e0" stroke="#2878b8" stroke-width="1"/><path d="M222.2 224.400c.2-3.200 1.300-5.600 4.300-5.600s4.100 2.400 4.300 5.600c-2.200 1.100-6.400 1.100-8.600 0z" fill="#6cc0f0" stroke="#2878b8" stroke-width="1"/><path d="M221.500 239.500h9c1.500 0 1.500 2.500 0 2.500h-1v8.500h-6v-8.500h-2c-1.500 0-1.500-2.500 0-2.500z" fill="#f8e078" stroke="#c09818" stroke-width="1"/><path d="M224.500 244h1M227 244h1M224.500 246.500h1M227 246.500h1" stroke="#806010" stroke-width="1"/></svg>
<div style="left:220px;top:115px;width:260px;height:21px;line-height:21px;font-size:13px;">ActivTrades MetaTrader 4</div>
<div style="left:241px;top:136px;width:100px;height:21px;line-height:21px;font-size:12px;">账户</div>
<div style="left:262px;top:155px;width:200px;height:21px;line-height:21px;font-size:13px;">ActivTradesCorp-5</div>
<div style="left:283px;top:175px;width:240px;height:21px;line-height:21px;font-size:13px;">3017047: SUN Taoling 2nd account</div>
<div style="left:241px;top:196px;width:100px;height:21px;line-height:21px;font-size:12px;">技术指标</div>
<div style="left:241px;top:216px;width:17px;height:21px;line-height:21px;font-size:12px;">EA</div>
<div style="left:257.5px;top:216px;width:30px;height:21px;line-height:21px;font-size:12px;">交易</div>
<div style="left:241px;top:238px;width:100px;height:12px;line-height:12px;font-size:12px;line-height:17px;">脚本</div>
<div style="left:192px;top:250px;width:344px;height:1px;background:#000;"></div>
<div style="left:195px;top:250px;width:44px;height:22px;background:#fff;border:1px solid #000;border-top:none;box-shadow:1px 1px 0 #000;"></div>
<div style="left:195px;top:250px;width:44px;height:21px;line-height:21px;font-size:12px;text-align:center;">常用</div>
<div style="left:249px;top:250px;width:40px;height:21px;line-height:21px;font-size:12px;color:#808080;">收藏夹</div>
<div style="left:295px;top:254px;width:1px;height:15px;background:#808080;"></div>
<div style="left:0px;top:277px;width:540px;height:1px;background:#c4c4c4;"></div>
<div style="left:0px;top:278px;width:540px;height:2px;background:#fafafa;"></div>
<div style="left:540px;top:279px;width:1379px;height:2px;background:#fafafa;"></div>
<div style="left:540px;top:99px;width:1379px;height:160px;background:#f0f0f0;"></div>
<div style="left:540px;top:98px;width:1379px;height:1px;background:#696969;"></div>
<div style="left:540px;top:99px;width:1379px;height:1px;background:#3c3c3c;"></div>
<div style="left:540px;top:98px;width:1px;height:161px;background:#696969;"></div>
<svg style="left:0px;top:0px;clip-path:inset(0 0 0 0);" width="1919" height="280" viewBox="0 0 1919 280"><defs><linearGradient id="frm" x1="0" y1="0" x2="0" y2="1"><stop offset="0" stop-color="#9db7d5"/><stop offset=".25" stop-color="#b4cbe5"/><stop offset="1" stop-color="#c3d6eb"/></linearGradient><linearGradient id="frm2" x1="0" y1="0" x2="0" y2="1"><stop offset="0" stop-color="#b9cde4"/><stop offset=".25" stop-color="#c8d9ec"/><stop offset="1" stop-color="#d6e3f2"/></linearGradient><linearGradient id="btn" x1="0" y1="0" x2="0" y2="1"><stop offset="0" stop-color="#5656fa"/><stop offset="1" stop-color="#3232dc"/></linearGradient><linearGradient id="prc" x1="0" y1="0" x2="0" y2="1"><stop offset="0" stop-color="#3434dc"/><stop offset="1" stop-color="#1010b4"/></linearGradient><linearGradient id="spn" x1="0" y1="0" x2="0" y2="1"><stop offset="0" stop-color="#f4f4f4"/><stop offset="1" stop-color="#d4d4d4"/></linearGradient><linearGradient id="wb" x1="0" y1="0" x2="0" y2="1"><stop offset="0" stop-color="#d8e4f2"/><stop offset=".5" stop-color="#b8cce4"/><stop offset="1" stop-color="#c8d8ec"/></linearGradient><linearGradient id="wr" x1="0" y1="0" x2="0" y2="1"><stop offset="0" stop-color="#e8a090"/><stop offset=".45" stop-color="#d05840"/><stop offset=".5" stop-color="#c03018"/><stop offset="1" stop-color="#d85838"/></linearGradient><clipPath id="c1"><rect x="554" y="136" width="796" height="120"/></clipPath><clipPath id="c2"><rect x="1418" y="136" width="500" height="120"/></clipPath></defs><path d="M540.500 259V106a6 6 0 0 1 6-6h852a6 6 0 0 1 6 6V259z" fill="url(#frm)" stroke="#5a6a80" stroke-width="1"/><path d="M541.500 259V106.500a5 5 0 0 1 5-5h851a5 5 0 0 1 5 5V259" fill="none" stroke="#e4eef8" stroke-width="1" opacity=".8"/><rect x="549.500" y="131.500" width="846" height="126" fill="#000"/><path d="M553.500 256V134.500H1395" fill="none" stroke="#fff" stroke-width="1"/><g opacity="1"><rect x="552.5" y="111.5" width="8.500" height="7" fill="#fff" stroke="#4a88d0" stroke-width="1"/><path d="M554 114.5l1.500-1 1.500 1.500 1.500-1.500 1 .8" stroke="#4a88d0" stroke-width=".8" fill="none"/><rect x="555.5" y="115.5" width="10" height="8" fill="#fff" stroke="#3a78c8" stroke-width="1.200"/><path d="M557.5 120l1.500 2 1.500-3 1.500 3 1.500-2" stroke="#3a78c8" stroke-width=".9" fill="none"/></g><rect x="1295.500" y="109.500" width="31" height="17" rx="2.500" fill="url(#wb)" stroke="#6a7c94" stroke-width="1"/><rect x="1329.500" y="109.500" width="31" height="17" rx="2.500" fill="url(#wb)" stroke="#6a7c94" stroke-width="1"/><rect x="1363.500" y="109.500" width="31" height="17" rx="2.500" fill="url(#wr)" stroke="#7a2a1a" stroke-width="1"/><rect x="1305.500" y="117.500" width="10" height="3" fill="#fff" stroke="#4a5a70" stroke-width="1"/><rect x="1339.500" y="113.500" width="10" height="7.500" fill="#fff" stroke="#4a5a70" stroke-width="1"/><rect x="1342" y="116" width="5" height="2.500" fill="#6a7c94"/><path d="M1374.500 114l9 7.500M1383.500 114l-9 7.500" stroke="#5a2018" stroke-width="3.600"/><path d="M1374.500 114l9 7.500M1383.500 114l-9 7.500" stroke="#fff" stroke-width="2"/><g clip-path="url(#c1)" stroke="#8a98a8" stroke-width="1" stroke-dasharray="3 3" fill="none"><path d="M586.5 136V256"/><path d="M618.5 136V256"/><path d="M650.5 136V256"/><path d="M682.5 136V256"/><path d="M714.5 136V256"/><path d="M746.5 136V256"/><path d="M778.5 136V256"/><path d="M810.5 136V256"/><path d="M842.5 136V256"/><path d="M874.5 136V256"/><path d="M906.5 136V256"/><path d="M938.5 136V256"/><path d="M970.5 136V256"/><path d="M1002.5 136V256"/><path d="M1034.5 136V256"/><path d="M1066.5 136V256"/><path d="M1098.5 136V256"/><path d="M1130.5 136V256"/><path d="M1162.5 136V256"/><path d="M1194.5 136V256"/><path d="M1226.5 136V256"/><path d="M1258.5 136V256"/><path d="M1290.5 136V256"/><path d="M1322.5 136V256"/><path d="M554 148.5H1349"/><path d="M554 181.5H1349"/><path d="M554 214.5H1349"/><path d="M554 247.5H1349"/></g><path d="M1349.500 136V256" stroke="#fff" stroke-width="1"/><path d="M1349.500 148.5h4" stroke="#fff" stroke-width="1"/><path d="M1349.500 181.5h4" stroke="#fff" stroke-width="1"/><path d="M1349.500 214.5h4" stroke="#fff" stroke-width="1"/><path d="M1349.500 247.5h4" stroke="#fff" stroke-width="1"/><g clip-path="url(#c1)"><path d="M682.500 244V256M690.500 247.700V256" stroke="#00ff00" stroke-width="1"/><path d="M810.5 219V260" stroke="#00ff00" stroke-width="1"/><rect x="808.5" y="232.5" width="4" height="30" fill="#000" stroke="#00ff00" stroke-width="1"/><path d="M818.5 208V236" stroke="#00ff00" stroke-width="1"/><rect x="816.5" y="208.5" width="4" height="23" fill="#000" stroke="#00ff00" stroke-width="1"/><path d="M826.5 196V235" stroke="#00ff00" stroke-width="1"/><rect x="824.5" y="208.5" width="4" height="15" fill="#fff" stroke="#00ff00" stroke-width="1"/><path d="M834.5 216V253" stroke="#00ff00" stroke-width="1"/><rect x="832.5" y="223.5" width="4" height="24" fill="#fff" stroke="#00ff00" stroke-width="1"/><path d="M842.5 217V250" stroke="#00ff00" stroke-width="1"/><rect x="840.5" y="236.5" width="4" height="11" fill="#000" stroke="#00ff00" stroke-width="1"/><path d="M850.5 231V260" stroke="#00ff00" stroke-width="1"/><rect x="848.5" y="238.5" width="4" height="7" fill="#fff" stroke="#00ff00" stroke-width="1"/><path d="M858.5 227V251" stroke="#00ff00" stroke-width="1"/><rect x="856.5" y="241.5" width="4" height="3" fill="#000" stroke="#00ff00" stroke-width="1"/><path d="M866.5 231V245" stroke="#00ff00" stroke-width="1"/><rect x="864.5" y="238.5" width="4" height="2" fill="#000" stroke="#00ff00" stroke-width="1"/><path d="M874.5 231V248" stroke="#00ff00" stroke-width="1"/><rect x="872.5" y="238.5" width="4" height="7" fill="#fff" stroke="#00ff00" stroke-width="1"/><path d="M882.5 241V260" stroke="#00ff00" stroke-width="1"/><rect x="880.5" y="245.5" width="4" height="17" fill="#fff" stroke="#00ff00" stroke-width="1"/><path d="M1138.5 202V260" stroke="#00ff00" stroke-width="1"/><rect x="1136.5" y="239.5" width="4" height="23" fill="#000" stroke="#00ff00" stroke-width="1"/><path d="M1146.5 174V245" stroke="#00ff00" stroke-width="1"/><rect x="1144.5" y="183.5" width="4" height="56" fill="#000" stroke="#00ff00" stroke-width="1"/><path d="M1154.5 165V191" stroke="#00ff00" stroke-width="1"/><rect x="1152.5" y="178.5" width="4" height="5" fill="#000" stroke="#00ff00" stroke-width="1"/><path d="M1162.5 164V183" stroke="#00ff00" stroke-width="1"/><rect x="1160.5" y="170.5" width="4" height="10" fill="#000" stroke="#00ff00" stroke-width="1"/><path d="M1170.5 157V191" stroke="#00ff00" stroke-width="1"/><rect x="1168.5" y="174.5" width="4" height="11" fill="#fff" stroke="#00ff00" stroke-width="1"/><path d="M1178.5 180V197" stroke="#00ff00" stroke-width="1"/><rect x="1176.5" y="184.5" width="4" height="10" fill="#fff" stroke="#00ff00" stroke-width="1"/><path d="M1186.5 159V218" stroke="#00ff00" stroke-width="1"/><rect x="1184.5" y="175.5" width="4" height="19" fill="#000" stroke="#00ff00" stroke-width="1"/><path d="M1194.5 155V190" stroke="#00ff00" stroke-width="1"/><rect x="1192.5" y="175.5" width="4" height="8" fill="#fff" stroke="#00ff00" stroke-width="1"/><path d="M1202.5 163V199" stroke="#00ff00" stroke-width="1"/><rect x="1200.5" y="183.5" width="4" height="3" fill="#fff" stroke="#00ff00" stroke-width="1"/><path d="M1210.5 183V233" stroke="#00ff00" stroke-width="1"/><rect x="1208.5" y="188.5" width="4" height="39" fill="#fff" stroke="#00ff00" stroke-width="1"/><path d="M1218.5 207V233" stroke="#00ff00" stroke-width="1"/><rect x="1216.5" y="217.5" width="4" height="8" fill="#000" stroke="#00ff00" stroke-width="1"/><path d="M1226.5 198V221" stroke="#00ff00" stroke-width="1"/><rect x="1224.5" y="208.5" width="4" height="8" fill="#000" stroke="#00ff00" stroke-width="1"/><path d="M1234.5 168V238" stroke="#00ff00" stroke-width="1"/><rect x="1232.5" y="174.5" width="4" height="34" fill="#000" stroke="#00ff00" stroke-width="1"/><path d="M1242.5 150V201" stroke="#00ff00" stroke-width="1"/><rect x="1240.5" y="165.5" width="4" height="9" fill="#000" stroke="#00ff00" stroke-width="1"/><path d="M1250.5 162V189" stroke="#00ff00" stroke-width="1"/><rect x="1248.5" y="165.5" width="4" height="20" fill="#fff" stroke="#00ff00" stroke-width="1"/><path d="M1258.5 183V205" stroke="#00ff00" stroke-width="1"/><rect x="1256.5" y="184.5" width="4" height="15" fill="#fff" stroke="#00ff00" stroke-width="1"/><path d="M1266.5 196V222" stroke="#00ff00" stroke-width="1"/><rect x="1264.5" y="200.5" width="4" height="20" fill="#fff" stroke="#00ff00" stroke-width="1"/><path d="M1274.5 216V249" stroke="#00ff00" stroke-width="1"/><rect x="1272.5" y="219.5" width="4" height="19" fill="#fff" stroke="#00ff00" stroke-width="1"/><path d="M1282.5 206V239" stroke="#00ff00" stroke-width="1"/><rect x="1280.5" y="219.5" width="4" height="19" fill="#000" stroke="#00ff00" stroke-width="1"/><path d="M1290.5 194V260" stroke="#00ff00" stroke-width="1"/><rect x="1288.5" y="219.5" width="4" height="43" fill="#fff" stroke="#00ff00" stroke-width="1"/><path d="M1188.500 256L1197 243 1205 232 1214.500 223 1224.300 214.300 1232 205 1238.700 197.600 1245.800 190.500 1253 188 1262.500 190.500 1276.800 196.400 1290 203.600 1300.700 216.700 1315 231 1330.500 244.200" fill="none" stroke="#e01010" stroke-width="1"/></g><rect x="557" y="154" width="51.500" height="24" fill="url(#btn)"/><rect x="557" y="177.500" width="109" height="33.500" fill="url(#prc)"/><rect x="667.8" y="177.500" width="108" height="33.500" fill="url(#prc)"/><rect x="724.3" y="154" width="51.500" height="24" fill="url(#btn)"/><path d="M560.5 177.500h44M728 177.500h44" stroke="#8a8af8" stroke-width="1"/><rect x="610.5" y="154" width="111.500" height="22" fill="#fff" stroke="#8a8a8a" stroke-width="1"/><rect x="611" y="154.500" width="21.500" height="21" fill="url(#spn)"/><rect x="700" y="154.500" width="21.500" height="21" fill="url(#spn)"/><path d="M632.5 154.500v21M700 154.500v21" stroke="#a8a8a8" stroke-width="1"/><path d="M618.5 163.500h6l-3 3.200z" fill="#000"/><path d="M707.8 166.500h6l-3-3.200z" fill="#000"/><path d="M557 146.500l3.500-4.500 3.500 4.500z" fill="#fff"/><path d="M1405.500 259V106a6 6 0 0 1 6-6h520V259z" fill="url(#frm2)" stroke="#5a6a80" stroke-width="1"/><rect x="1413.500" y="131.500" width="510" height="126" fill="#000"/><path d="M1417.500 256V134.500H1920" fill="none" stroke="#fff" stroke-width="1"/><g opacity="0.9"><rect x="1416.5" y="111.5" width="8.500" height="7" fill="#fff" stroke="#4a88d0" stroke-width="1"/><path d="M1418 114.5l1.500-1 1.500 1.500 1.500-1.500 1 .8" stroke="#4a88d0" stroke-width=".8" fill="none"/><rect x="1419.5" y="115.5" width="10" height="8" fill="#fff" stroke="#3a78c8" stroke-width="1.200"/><path d="M1421.5 120l1.500 2 1.500-3 1.500 3 1.500-2" stroke="#3a78c8" stroke-width=".9" fill="none"/></g><g clip-path="url(#c2)" stroke="#8a98a8" stroke-width="1" stroke-dasharray="3 3" fill="none"><path d="M1450.5 136V256"/><path d="M1482.5 136V256"/><path d="M1514.5 136V256"/><path d="M1546.5 136V256"/><path d="M1578.5 136V256"/><path d="M1610.5 136V256"/><path d="M1642.5 136V256"/><path d="M1674.5 136V256"/><path d="M1706.5 136V256"/><path d="M1738.5 136V256"/><path d="M1770.5 136V256"/><path d="M1802.5 136V256"/><path d="M1834.5 136V256"/><path d="M1866.5 136V256"/><path d="M1898.5 136V256"/><path d="M1930.5 136V256"/><path d="M1418 148.5H1920"/><path d="M1418 181.5H1920"/><path d="M1418 214.5H1920"/><path d="M1418 247.5H1920"/></g><path d="M1418 225.500H1918" stroke="#7a8ea8" stroke-width="1"/><g clip-path="url(#c2)"><path d="M1770.500 251V257M1773.500 253V257M1776.500 250V257M1779.500 252V257M1782.500 243V257M1785.500 241.500V257M1788.500 249V257M1790.500 252V257" stroke="#00ff00" stroke-width="1"/></g><rect x="1421" y="154" width="51.500" height="24" fill="url(#btn)"/><rect x="1421" y="177.500" width="109" height="33.500" fill="url(#prc)"/><rect x="1531.8" y="177.500" width="108" height="33.500" fill="url(#prc)"/><rect x="1588.3" y="154" width="51.500" height="24" fill="url(#btn)"/><path d="M1424.5 177.500h44M1592 177.500h44" stroke="#8a8af8" stroke-width="1"/><rect x="1474.5" y="154" width="111.500" height="22" fill="#fff" stroke="#8a8a8a" stroke-width="1"/><rect x="1475" y="154.500" width="21.500" height="21" fill="url(#spn)"/><rect x="1564" y="154.500" width="21.500" height="21" fill="url(#spn)"/><path d="M1496.5 154.500v21M1564 154.500v21" stroke="#a8a8a8" stroke-width="1"/><path d="M1482.5 163.500h6l-3 3.200z" fill="#000"/><path d="M1571.8 166.500h6l-3-3.200z" fill="#000"/><path d="M1421 146.500l3.500-4.500 3.500 4.500z" fill="#fff"/><rect x="540" y="256" width="1379" height="2" fill="#fff"/><rect x="539" y="258" width="1380" height="1" fill="#000"/></svg>
<div style="left:571px;top:108px;width:120px;height:21px;line-height:21px;font-size:12px;">EURUSD,H4</div>
<div style="left:1435px;top:108px;width:120px;height:21px;line-height:21px;font-size:12px;color:#8c8c8c;">GBPUSD,H4</div>
<div style="left:569px;top:136px;width:240px;height:14px;line-height:14px;font-size:9.450px;color:#fff;white-space:pre;">EURUSD,H4  1.20728 1.21057 1.20509 1.20675</div>
<div style="left:1433px;top:136px;width:240px;height:14px;line-height:14px;font-size:9.450px;color:#fff;white-space:pre;">GBPUSD,H4  1.40502 1.40706 1.40216 1.40381</div>
<div style="left:557px;top:154px;width:51.5px;height:23px;line-height:23px;font-size:11.500px;color:#fff;text-align:center;">SELL</div>
<div style="left:724.3px;top:154px;width:51.5px;height:23px;line-height:23px;font-size:11.500px;color:#fff;text-align:center;">BUY</div>
<div style="left:633px;top:154px;width:63.5px;height:22px;line-height:22px;font-size:12.500px;text-align:right;">1.00</div>
<div style="left:575px;top:191px;width:26px;height:20px;line-height:20px;font-size:11.500px;font-weight:bold;color:#fff;text-align:right;letter-spacing:-.3px;">1.20</div>
<div style="left:599px;top:177px;width:46px;height:34px;line-height:34px;font-size:30px;color:#fff;text-align:center;letter-spacing:-1px;">67</div>
<div style="left:642px;top:178px;width:12px;height:16px;line-height:16px;font-size:11.500px;font-weight:bold;color:#fff;text-align:center;">0</div>
<div style="left:685.5px;top:191px;width:26px;height:20px;line-height:20px;font-size:11.500px;font-weight:bold;color:#fff;text-align:right;letter-spacing:-.3px;">1.20</div>
<div style="left:710px;top:177px;width:46px;height:34px;line-height:34px;font-size:30px;color:#fff;text-align:center;letter-spacing:-1px;">68</div>
<div style="left:753px;top:178px;width:12px;height:16px;line-height:16px;font-size:11.500px;font-weight:bold;color:#fff;text-align:center;">6</div>
<div style="left:1421px;top:154px;width:51.5px;height:23px;line-height:23px;font-size:11.500px;color:#fff;text-align:center;">SELL</div>
<div style="left:1588.3px;top:154px;width:51.5px;height:23px;line-height:23px;font-size:11.500px;color:#fff;text-align:center;">BUY</div>
<div style="left:1497px;top:154px;width:63.5px;height:22px;line-height:22px;font-size:12.500px;text-align:right;">1.00</div>
<div style="left:1439px;top:191px;width:26px;height:20px;line-height:20px;font-size:11.500px;font-weight:bold;color:#fff;text-align:right;letter-spacing:-.3px;">1.40</div>
<div style="left:1463px;top:177px;width:46px;height:34px;line-height:34px;font-size:30px;color:#fff;text-align:center;letter-spacing:-1px;">37</div>
<div style="left:1506px;top:178px;width:12px;height:16px;line-height:16px;font-size:11.500px;font-weight:bold;color:#fff;text-align:center;">6</div>
<div style="left:1549.5px;top:191px;width:26px;height:20px;line-height:20px;font-size:11.500px;font-weight:bold;color:#fff;text-align:right;letter-spacing:-.3px;">1.40</div>
<div style="left:1574px;top:177px;width:46px;height:34px;line-height:34px;font-size:30px;color:#fff;text-align:center;letter-spacing:-1px;">39</div>
<div style="left:1617px;top:178px;width:12px;height:16px;line-height:16px;font-size:11.500px;font-weight:bold;color:#fff;text-align:center;">5</div>
<div style="left:1355px;top:141px;width:40px;height:14px;line-height:14px;font-size:9.200px;color:#fff;">1.21825</div>
<div style="left:1355px;top:174px;width:40px;height:14px;line-height:14px;font-size:9.200px;color:#fff;">1.21600</div>
<div style="left:1355px;top:207px;width:40px;height:14px;line-height:14px;font-size:9.200px;color:#fff;">1.21380</div>
<div style="left:1355px;top:240px;width:40px;height:14px;line-height:14px;font-size:9.200px;color:#fff;">1.21155</div>
<div style="left:540px;top:259px;width:1379px;height:19px;background:#f0f0f0;"></div>
<div style="left:540px;top:259px;width:1px;height:18px;background:#000;"></div>
<div style="left:545px;top:258px;width:92px;height:19px;background:#fff;border:1px solid #000;border-top:none;box-shadow:1px 1px 0 #000;"></div>
<div style="left:545px;top:258px;width:92px;height:19px;line-height:19px;font-size:11.700px;text-align:center;">EURUSD,H4</div>
<div style="left:647px;top:258px;width:80px;height:19px;line-height:19px;font-size:11.700px;color:#7a86a0;">USDCHF,H4</div>
<div style="left:737px;top:258px;width:80px;height:19px;line-height:19px;font-size:11.700px;color:#7a86a0;">GBPUSD,H4</div>
<div style="left:827px;top:258px;width:80px;height:19px;line-height:19px;font-size:11.700px;color:#7a86a0;">USDJPY,H4</div>
<div style="left:725px;top:261px;width:1px;height:14px;background:#808080;"></div>
<div style="left:817px;top:261px;width:1px;height:14px;background:#808080;"></div>
<div style="left:902px;top:261px;width:1px;height:14px;background:#808080;"></div>
<svg style="left:1885px;top:262px;" width="30" height="10" viewBox="0 0 30 10"><path d="M6.500 1.500v7l-3.500-3.500zM22 1.500v7l3.500-3.500z" fill="#8a8a8a"/></svg>
<div style="left:0px;top:282px;width:15px;height:732px;background:#f0f0f0;"></div>
<div style="left:1px;top:296px;width:13px;height:718px;background:linear-gradient(#adc8eb,#a9c4e8 60%,#98b2d6);"></div>
<div style="left:0px;top:281px;width:15px;height:14px;line-height:14px;font-size:13px;font-weight:bold;text-align:center;">×</div>
<div style="left:15px;top:282px;width:1903px;height:707px;background:#fff;border-top:1px solid #a0a0a0;border-left:1px solid #a0a0a0;"></div>
<div style="left:16px;top:283px;width:1883px;height:25px;background:#fff;border-bottom:1px solid #d5d5d5;"></div>
<div style="left:22px;top:283.5px;width:60px;height:22px;line-height:22px;font-size:12px;">订单</div>
<div style="left:57px;top:286px;width:10px;height:22px;line-height:22px;font-size:9px;color:#555;">/</div>
<div style="left:182px;top:284px;width:1px;height:23px;background:#e0e0e0;"></div>
<div class="r" style="left:183px;top:283.5px;width:277px;height:22px;line-height:22px;font-size:12px;">时间</div>
<div style="left:465px;top:284px;width:1px;height:23px;background:#e0e0e0;"></div>
<div class="r" style="left:466px;top:283.5px;width:122px;height:22px;line-height:22px;font-size:12px;">类型</div>
<div style="left:593px;top:284px;width:1px;height:23px;background:#e0e0e0;"></div>
<div class="r" style="left:594px;top:283.5px;width:97px;height:22px;line-height:22px;font-size:12px;">手数</div>
<div style="left:696px;top:284px;width:1px;height:23px;background:#e0e0e0;"></div>
<div class="r" style="left:697px;top:283.5px;width:122px;height:22px;line-height:22px;font-size:12px;">交易品种</div>
<div style="left:824px;top:284px;width:1px;height:23px;background:#e0e0e0;"></div>
<div class="r" style="left:825px;top:283.5px;width:122px;height:22px;line-height:22px;font-size:12px;">价格</div>
<div style="left:952px;top:284px;width:1px;height:23px;background:#e0e0e0;"></div>
<div class="r" style="left:953px;top:283.5px;width:122px;height:22px;line-height:22px;font-size:12px;">止损</div>
<div style="left:1080px;top:284px;width:1px;height:23px;background:#e0e0e0;"></div>
<div class="r" style="left:1081px;top:283.5px;width:122px;height:22px;line-height:22px;font-size:12px;">止盈</div>
<div style="left:1208px;top:284px;width:1px;height:23px;background:#e0e0e0;"></div>
<div class="r" style="left:1209px;top:283.5px;width:277px;height:22px;line-height:22px;font-size:12px;">时间</div>
<div style="left:1491px;top:284px;width:1px;height:23px;background:#e0e0e0;"></div>
<div class="r" style="left:1492px;top:283.5px;width:122px;height:22px;line-height:22px;font-size:12px;">价格</div>
<div style="left:1619px;top:284px;width:1px;height:23px;background:#e0e0e0;"></div>
<div class="r" style="left:1620px;top:283.5px;width:122px;height:22px;line-height:22px;font-size:12px;">库存费</div>
<div style="left:1747px;top:284px;width:1px;height:23px;background:#e0e0e0;"></div>
<div class="r" style="left:1748px;top:283.5px;width:144.5px;height:22px;line-height:22px;font-size:12px;">获利</div>
<div style="left:16px;top:308px;width:1883px;height:21px;background:#ebebeb;border-bottom:1px solid #d0d0d0;"></div>
<svg style="left:19px;top:311px;" width="15" height="16" viewBox="0 0 15 16"><path d="M1.5 .5h7l3 3v10.5h-10z" fill="#fff" stroke="#555" stroke-width="1"/><path d="M8.5 .5v3h3" fill="#e8e8e8" stroke="#555" stroke-width="1"/><path d="M2 14.6h10" stroke="#999" stroke-width="1"/><circle cx="10.6" cy="11.6" r="3.1" fill="#1e90e8" stroke="#0b5fb0" stroke-width=".7"/><circle cx="9.8" cy="10.6" r="1.1" fill="#fff" opacity=".45"/></svg>
<div style="left:38px;top:308px;width:140px;height:20px;line-height:20px;">61481825</div>
<div class="r " style="left:183px;top:308px;width:279px;height:20px;line-height:20px;">2021.05.10 20:39:09</div>
<div class="r " style="left:466px;top:308px;width:124px;height:20px;line-height:20px;">buy</div>
<div class="r " style="left:594px;top:308px;width:99px;height:20px;line-height:20px;">30.00</div>
<div class="r " style="left:697px;top:308px;width:124px;height:20px;line-height:20px;">usatec</div>
<div class="r " style="left:825px;top:308px;width:124px;height:20px;line-height:20px;">13408.73</div>
<div class="r " style="left:953px;top:308px;width:124px;height:20px;line-height:20px;">0.00</div>
<div class="r " style="left:1081px;top:308px;width:124px;height:20px;line-height:20px;">0.00</div>
<div class="r " style="left:1209px;top:308px;width:279px;height:20px;line-height:20px;">2021.05.10 20:45:00</div>
<div class="r " style="left:1492px;top:308px;width:124px;height:20px;line-height:20px;">13387.23</div>
<div class="r " style="left:1620px;top:308px;width:124px;height:20px;line-height:20px;">0.00</div>
<div class="r " style="left:1748px;top:308px;width:147px;height:20px;line-height:20px;">-645.00</div>
<div style="left:181px;top:308px;width:1px;height:20px;background:#c4c4c4;"></div>
<div style="left:464px;top:308px;width:1px;height:20px;background:#c4c4c4;"></div>
<div style="left:592px;top:308px;width:1px;height:20px;background:#c4c4c4;"></div>
<div style="left:695px;top:308px;width:1px;height:20px;background:#c4c4c4;"></div>
<div style="left:823px;top:308px;width:1px;height:20px;background:#c4c4c4;"></div>
<div style="left:951px;top:308px;width:1px;height:20px;background:#c4c4c4;"></div>
<div style="left:1079px;top:308px;width:1px;height:20px;background:#c4c4c4;"></div>
<div style="left:1207px;top:308px;width:1px;height:20px;background:#c4c4c4;"></div>
<div style="left:1490px;top:308px;width:1px;height:20px;background:#c4c4c4;"></div>
<div style="left:1618px;top:308px;width:1px;height:20px;background:#c4c4c4;"></div>
<div style="left:1746px;top:308px;width:1px;height:20px;background:#c4c4c4;"></div>
<div style="left:16px;top:329px;width:1883px;height:21px;background:#fff;border-bottom:1px solid #d0d0d0;"></div>
<svg style="left:19px;top:332px;" width="15" height="16" viewBox="0 0 15 16"><path d="M1.5 .5h7l3 3v10.5h-10z" fill="#fff" stroke="#555" stroke-width="1"/><path d="M8.5 .5v3h3" fill="#e8e8e8" stroke="#555" stroke-width="1"/><path d="M2 14.6h10" stroke="#999" stroke-width="1"/><circle cx="10.6" cy="11.6" r="3.1" fill="#f04a18" stroke="#b02a08" stroke-width=".7"/><circle cx="9.8" cy="10.6" r="1.1" fill="#fff" opacity=".45"/></svg>
<div style="left:38px;top:329px;width:140px;height:20px;line-height:20px;">61482325</div>
<div class="r " style="left:183px;top:329px;width:279px;height:20px;line-height:20px;">2021.05.10 20:50:54</div>
<div class="r " style="left:466px;top:329px;width:124px;height:20px;line-height:20px;">sell</div>
<div class="r " style="left:594px;top:329px;width:99px;height:20px;line-height:20px;">30.00</div>
<div class="r " style="left:697px;top:329px;width:124px;height:20px;line-height:20px;">usatec</div>
<div class="r " style="left:825px;top:329px;width:124px;height:20px;line-height:20px;">13373.26</div>
<div class="r " style="left:953px;top:329px;width:124px;height:20px;line-height:20px;">0.00</div>
<div class="r " style="left:1081px;top:329px;width:124px;height:20px;line-height:20px;">0.00</div>
<div class="r " style="left:1209px;top:329px;width:279px;height:20px;line-height:20px;">2021.05.10 21:00:28</div>
<div class="r " style="left:1492px;top:329px;width:124px;height:20px;line-height:20px;">13391.69</div>
<div class="r " style="left:1620px;top:329px;width:124px;height:20px;line-height:20px;">0.00</div>
<div class="r " style="left:1748px;top:329px;width:147px;height:20px;line-height:20px;">-552.90</div>
<div style="left:181px;top:329px;width:1px;height:20px;background:#c4c4c4;"></div>
<div style="left:464px;top:329px;width:1px;height:20px;background:#c4c4c4;"></div>
<div style="left:592px;top:329px;width:1px;height:20px;background:#c4c4c4;"></div>
<div style="left:695px;top:329px;width:1px;height:20px;background:#c4c4c4;"></div>
<div style="left:823px;top:329px;width:1px;height:20px;background:#c4c4c4;"></div>
<div style="left:951px;top:329px;width:1px;height:20px;background:#c4c4c4;"></div>
<div style="left:1079px;top:329px;width:1px;height:20px;background:#c4c4c4;"></div>
<div style="left:1207px;top:329px;width:1px;height:20px;background:#c4c4c4;"></div>
<div style="left:1490px;top:329px;width:1px;height:20px;background:#c4c4c4;"></div>
<div style="left:1618px;top:329px;width:1px;height:20px;background:#c4c4c4;"></div>
<div style="left:1746px;top:329px;width:1px;height:20px;background:#c4c4c4;"></div>
<div style="left:16px;top:350px;width:1883px;height:21px;background:#ebebeb;border-bottom:1px solid #d0d0d0;"></div>
<svg style="left:19px;top:353px;" width="15" height="16" viewBox="0 0 15 16"><path d="M1.5 .5h7l3 3v10.5h-10z" fill="#fff" stroke="#555" stroke-width="1"/><path d="M8.5 .5v3h3" fill="#e8e8e8" stroke="#555" stroke-width="1"/><path d="M2 14.6h10" stroke="#999" stroke-width="1"/><circle cx="10.6" cy="11.6" r="3.1" fill="#1e90e8" stroke="#0b5fb0" stroke-width=".7"/><circle cx="9.8" cy="10.6" r="1.1" fill="#fff" opacity=".45"/></svg>
<div style="left:38px;top:350px;width:140px;height:20px;line-height:20px;">61483330</div>
<div class="r " style="left:183px;top:350px;width:279px;height:20px;line-height:20px;">2021.05.10 21:16:10</div>
<div class="r " style="left:466px;top:350px;width:124px;height:20px;line-height:20px;">buy</div>
<div class="r " style="left:594px;top:350px;width:99px;height:20px;line-height:20px;">30.00</div>
<div class="r " style="left:697px;top:350px;width:124px;height:20px;line-height:20px;">usatec</div>
<div class="r " style="left:825px;top:350px;width:124px;height:20px;line-height:20px;">13402.45</div>
<div class="r " style="left:953px;top:350px;width:124px;height:20px;line-height:20px;">0.00</div>
<div class="r " style="left:1081px;top:350px;width:124px;height:20px;line-height:20px;">0.00</div>
<div class="r " style="left:1209px;top:350px;width:279px;height:20px;line-height:20px;">2021.05.10 21:21:56</div>
<div class="r " style="left:1492px;top:350px;width:124px;height:20px;line-height:20px;">13385.66</div>
<div class="r " style="left:1620px;top:350px;width:124px;height:20px;line-height:20px;">0.00</div>
<div class="r " style="left:1748px;top:350px;width:147px;height:20px;line-height:20px;">-503.70</div>
<div style="left:181px;top:350px;width:1px;height:20px;background:#c4c4c4;"></div>
<div style="left:464px;top:350px;width:1px;height:20px;background:#c4c4c4;"></div>
<div style="left:592px;top:350px;width:1px;height:20px;background:#c4c4c4;"></div>
<div style="left:695px;top:350px;width:1px;height:20px;background:#c4c4c4;"></div>
<div style="left:823px;top:350px;width:1px;height:20px;background:#c4c4c4;"></div>
<div style="left:951px;top:350px;width:1px;height:20px;background:#c4c4c4;"></div>
<div style="left:1079px;top:350px;width:1px;height:20px;background:#c4c4c4;"></div>
<div style="left:1207px;top:350px;width:1px;height:20px;background:#c4c4c4;"></div>
<div style="left:1490px;top:350px;width:1px;height:20px;background:#c4c4c4;"></div>
<div style="left:1618px;top:350px;width:1px;height:20px;background:#c4c4c4;"></div>
<div style="left:1746px;top:350px;width:1px;height:20px;background:#c4c4c4;"></div>
<div style="left:16px;top:371px;width:1883px;height:21px;background:#fff;border-bottom:1px solid #d0d0d0;"></div>
<svg style="left:19px;top:374px;" width="15" height="16" viewBox="0 0 15 16"><path d="M1.5 .5h7l3 3v10.5h-10z" fill="#fff" stroke="#555" stroke-width="1"/><path d="M8.5 .5v3h3" fill="#e8e8e8" stroke="#555" stroke-width="1"/><path d="M2 14.6h10" stroke="#999" stroke-width="1"/><circle cx="10.6" cy="11.6" r="3.1" fill="#f04a18" stroke="#b02a08" stroke-width=".7"/><circle cx="9.8" cy="10.6" r="1.1" fill="#fff" opacity=".45"/></svg>
<div style="left:38px;top:371px;width:140px;height:20px;line-height:20px;">61484209</div>
<div class="r " style="left:183px;top:371px;width:279px;height:20px;line-height:20px;">2021.05.10 21:54:50</div>
<div class="r " style="left:466px;top:371px;width:124px;height:20px;line-height:20px;">sell</div>
<div class="r " style="left:594px;top:371px;width:99px;height:20px;line-height:20px;">30.00</div>
<div class="r " style="left:697px;top:371px;width:124px;height:20px;line-height:20px;">usatec</div>
<div class="r " style="left:825px;top:371px;width:124px;height:20px;line-height:20px;">13388.46</div>
<div class="r " style="left:953px;top:371px;width:124px;height:20px;line-height:20px;">0.00</div>
<div class="r " style="left:1081px;top:371px;width:124px;height:20px;line-height:20px;">0.00</div>
<div class="r " style="left:1209px;top:371px;width:279px;height:20px;line-height:20px;">2021.05.10 22:10:57</div>
<div class="r " style="left:1492px;top:371px;width:124px;height:20px;line-height:20px;">13353.71</div>
<div class="r " style="left:1620px;top:371px;width:124px;height:20px;line-height:20px;">0.00</div>
<div class="r " style="left:1748px;top:371px;width:147px;height:20px;line-height:20px;">1 042.50</div>
<div style="left:181px;top:371px;width:1px;height:20px;background:#c4c4c4;"></div>
<div style="left:464px;top:371px;width:1px;height:20px;background:#c4c4c4;"></div>
<div style="left:592px;top:371px;width:1px;height:20px;background:#c4c4c4;"></div>
<div style="left:695px;top:371px;width:1px;height:20px;background:#c4c4c4;"></div>
<div style="left:823px;top:371px;width:1px;height:20px;background:#c4c4c4;"></div>
<div style="left:951px;top:371px;width:1px;height:20px;background:#c4c4c4;"></div>
<div style="left:1079px;top:371px;width:1px;height:20px;background:#c4c4c4;"></div>
<div style="left:1207px;top:371px;width:1px;height:20px;background:#c4c4c4;"></div>
<div style="left:1490px;top:371px;width:1px;height:20px;background:#c4c4c4;"></div>
<div style="left:1618px;top:371px;width:1px;height:20px;background:#c4c4c4;"></div>
<div style="left:1746px;top:371px;width:1px;height:20px;background:#c4c4c4;"></div>
<div style="left:16px;top:392px;width:1883px;height:21px;background:#ebebeb;border-bottom:1px solid #d0d0d0;"></div>
<svg style="left:19px;top:395px;" width="15" height="16" viewBox="0 0 15 16"><path d="M1.5 .5h7l3 3v10.5h-10z" fill="#fff" stroke="#555" stroke-width="1"/><path d="M8.5 .5v3h3" fill="#e8e8e8" stroke="#555" stroke-width="1"/><path d="M2 14.6h10" stroke="#999" stroke-width="1"/><circle cx="10.6" cy="11.6" r="3.1" fill="#f04a18" stroke="#b02a08" stroke-width=".7"/><circle cx="9.8" cy="10.6" r="1.1" fill="#fff" opacity=".45"/></svg>
<div style="left:38px;top:392px;width:140px;height:20px;line-height:20px;">61484464</div>
<div class="r " style="left:183px;top:392px;width:279px;height:20px;line-height:20px;">2021.05.10 21:59:03</div>
<div class="r " style="left:466px;top:392px;width:124px;height:20px;line-height:20px;">sell</div>
<div class="r " style="left:594px;top:392px;width:99px;height:20px;line-height:20px;">5.00</div>
<div class="r " style="left:697px;top:392px;width:124px;height:20px;line-height:20px;">usaind</div>
<div class="r " style="left:825px;top:392px;width:124px;height:20px;line-height:20px;">34755.57</div>
<div class="r " style="left:953px;top:392px;width:124px;height:20px;line-height:20px;">0.00</div>
<div class="r " style="left:1081px;top:392px;width:124px;height:20px;line-height:20px;">0.00</div>
<div class="r " style="left:1209px;top:392px;width:279px;height:20px;line-height:20px;">2021.05.10 22:08:08</div>
<div class="r " style="left:1492px;top:392px;width:124px;height:20px;line-height:20px;">34749.36</div>
<div class="r " style="left:1620px;top:392px;width:124px;height:20px;line-height:20px;">0.00</div>
<div class="r " style="left:1748px;top:392px;width:147px;height:20px;line-height:20px;">31.05</div>
<div style="left:181px;top:392px;width:1px;height:20px;background:#c4c4c4;"></div>
<div style="left:464px;top:392px;width:1px;height:20px;background:#c4c4c4;"></div>
<div style="left:592px;top:392px;width:1px;height:20px;background:#c4c4c4;"></div>
<div style="left:695px;top:392px;width:1px;height:20px;background:#c4c4c4;"></div>
<div style="left:823px;top:392px;width:1px;height:20px;background:#c4c4c4;"></div>
<div style="left:951px;top:392px;width:1px;height:20px;background:#c4c4c4;"></div>
<div style="left:1079px;top:392px;width:1px;height:20px;background:#c4c4c4;"></div>
<div style="left:1207px;top:392px;width:1px;height:20px;background:#c4c4c4;"></div>
<div style="left:1490px;top:392px;width:1px;height:20px;background:#c4c4c4;"></div>
<div style="left:1618px;top:392px;width:1px;height:20px;background:#c4c4c4;"></div>
<div style="left:1746px;top:392px;width:1px;height:20px;background:#c4c4c4;"></div>
<div style="left:16px;top:413px;width:1883px;height:21px;background:#fff;border-bottom:1px solid #d0d0d0;"></div>
<svg style="left:19px;top:416px;" width="15" height="16" viewBox="0 0 15 16"><path d="M1.5 .5h7l3 3v10.5h-10z" fill="#fff" stroke="#555" stroke-width="1"/><path d="M8.5 .5v3h3" fill="#e8e8e8" stroke="#555" stroke-width="1"/><path d="M2 14.6h10" stroke="#999" stroke-width="1"/><circle cx="10.6" cy="11.6" r="3.1" fill="#f04a18" stroke="#b02a08" stroke-width=".7"/><circle cx="9.8" cy="10.6" r="1.1" fill="#fff" opacity=".45"/></svg>
<div style="left:38px;top:413px;width:140px;height:20px;line-height:20px;">61484485</div>
<div class="r " style="left:183px;top:413px;width:279px;height:20px;line-height:20px;">2021.05.10 21:59:59</div>
<div class="r " style="left:466px;top:413px;width:124px;height:20px;line-height:20px;">sell</div>
<div class="r " style="left:594px;top:413px;width:99px;height:20px;line-height:20px;">10.00</div>
<div class="r " style="left:697px;top:413px;width:124px;height:20px;line-height:20px;">ger30</div>
<div class="r " style="left:825px;top:413px;width:124px;height:20px;line-height:20px;">15321.20</div>
<div class="r " style="left:953px;top:413px;width:124px;height:20px;line-height:20px;">0.00</div>
<div class="r " style="left:1081px;top:413px;width:124px;height:20px;line-height:20px;">0.00</div>
<div class="r " style="left:1209px;top:413px;width:279px;height:20px;line-height:20px;">2021.05.11 02:15:15</div>
<div class="r " style="left:1492px;top:413px;width:124px;height:20px;line-height:20px;">15315.89</div>
<div class="r " style="left:1620px;top:413px;width:124px;height:20px;line-height:20px;">-13.25</div>
<div class="r " style="left:1748px;top:413px;width:147px;height:20px;line-height:20px;">64.26</div>
<div style="left:181px;top:413px;width:1px;height:20px;background:#c4c4c4;"></div>
<div style="left:464px;top:413px;width:1px;height:20px;background:#c4c4c4;"></div>
<div style="left:592px;top:413px;width:1px;height:20px;background:#c4c4c4;"></div>
<div style="left:695px;top:413px;width:1px;height:20px;background:#c4c4c4;"></div>
<div style="left:823px;top:413px;width:1px;height:20px;background:#c4c4c4;"></div>
<div style="left:951px;top:413px;width:1px;height:20px;background:#c4c4c4;"></div>
<div style="left:1079px;top:413px;width:1px;height:20px;background:#c4c4c4;"></div>
<div style="left:1207px;top:413px;width:1px;height:20px;background:#c4c4c4;"></div>
<div style="left:1490px;top:413px;width:1px;height:20px;background:#c4c4c4;"></div>
<div style="left:1618px;top:413px;width:1px;height:20px;background:#c4c4c4;"></div>
<div style="left:1746px;top:413px;width:1px;height:20px;background:#c4c4c4;"></div>
<div style="left:16px;top:434px;width:1883px;height:21px;background:#ebebeb;border-bottom:1px solid #d0d0d0;"></div>
<svg style="left:19px;top:437px;" width="15" height="16" viewBox="0 0 15 16"><path d="M1.5 .5h7l3 3v10.5h-10z" fill="#fff" stroke="#555" stroke-width="1"/><path d="M8.5 .5v3h3" fill="#e8e8e8" stroke="#555" stroke-width="1"/><path d="M2 14.6h10" stroke="#999" stroke-width="1"/><circle cx="10.6" cy="11.6" r="3.1" fill="#f04a18" stroke="#b02a08" stroke-width=".7"/><circle cx="9.8" cy="10.6" r="1.1" fill="#fff" opacity=".45"/></svg>
<div style="left:38px;top:434px;width:140px;height:20px;line-height:20px;">61485250</div>
<div class="r " style="left:183px;top:434px;width:279px;height:20px;line-height:20px;">2021.05.10 22:30:30</div>
<div class="r " style="left:466px;top:434px;width:124px;height:20px;line-height:20px;">sell</div>
<div class="r " style="left:594px;top:434px;width:99px;height:20px;line-height:20px;">30.00</div>
<div class="r " style="left:697px;top:434px;width:124px;height:20px;line-height:20px;">usatec</div>
<div class="r " style="left:825px;top:434px;width:124px;height:20px;line-height:20px;">13351.74</div>
<div class="r " style="left:953px;top:434px;width:124px;height:20px;line-height:20px;">0.00</div>
<div class="r " style="left:1081px;top:434px;width:124px;height:20px;line-height:20px;">0.00</div>
<div class="r " style="left:1209px;top:434px;width:279px;height:20px;line-height:20px;">2021.05.10 22:39:39</div>
<div class="r " style="left:1492px;top:434px;width:124px;height:20px;line-height:20px;">13348.38</div>
<div class="r " style="left:1620px;top:434px;width:124px;height:20px;line-height:20px;">0.00</div>
<div class="r " style="left:1748px;top:434px;width:147px;height:20px;line-height:20px;">100.80</div>
<div style="left:181px;top:434px;width:1px;height:20px;background:#c4c4c4;"></div>
<div style="left:464px;top:434px;width:1px;height:20px;background:#c4c4c4;"></div>
<div style="left:592px;top:434px;width:1px;height:20px;background:#c4c4c4;"></div>
<div style="left:695px;top:434px;width:1px;height:20px;background:#c4c4c4;"></div>
<div style="left:823px;top:434px;width:1px;height:20px;background:#c4c4c4;"></div>
<div style="left:951px;top:434px;width:1px;height:20px;background:#c4c4c4;"></div>
<div style="left:1079px;top:434px;width:1px;height:20px;background:#c4c4c4;"></div>
<div style="left:1207px;top:434px;width:1px;height:20px;background:#c4c4c4;"></div>
<div style="left:1490px;top:434px;width:1px;height:20px;background:#c4c4c4;"></div>
<div style="left:1618px;top:434px;width:1px;height:20px;background:#c4c4c4;"></div>
<div style="left:1746px;top:434px;width:1px;height:20px;background:#c4c4c4;"></div>
<div style="left:16px;top:455px;width:1883px;height:21px;background:#fff;border-bottom:1px solid #d0d0d0;"></div>
<svg style="left:19px;top:458px;" width="15" height="16" viewBox="0 0 15 16"><path d="M1.5 .5h7l3 3v10.5h-10z" fill="#fff" stroke="#555" stroke-width="1"/><path d="M8.5 .5v3h3" fill="#e8e8e8" stroke="#555" stroke-width="1"/><path d="M2 14.6h10" stroke="#999" stroke-width="1"/><circle cx="10.6" cy="11.6" r="3.1" fill="#f04a18" stroke="#b02a08" stroke-width=".7"/><circle cx="9.8" cy="10.6" r="1.1" fill="#fff" opacity=".45"/></svg>
<div style="left:38px;top:455px;width:140px;height:20px;line-height:20px;">61485594</div>
<div class="r " style="left:183px;top:455px;width:279px;height:20px;line-height:20px;">2021.05.10 22:46:18</div>
<div class="r " style="left:466px;top:455px;width:124px;height:20px;line-height:20px;">sell</div>
<div class="r " style="left:594px;top:455px;width:99px;height:20px;line-height:20px;">30.00</div>
<div class="r " style="left:697px;top:455px;width:124px;height:20px;line-height:20px;">usatec</div>
<div class="r " style="left:825px;top:455px;width:124px;height:20px;line-height:20px;">13343.73</div>
<div class="r " style="left:953px;top:455px;width:124px;height:20px;line-height:20px;">0.00</div>
<div class="r " style="left:1081px;top:455px;width:124px;height:20px;line-height:20px;">0.00</div>
<div class="r " style="left:1209px;top:455px;width:279px;height:20px;line-height:20px;">2021.05.11 00:00:05</div>
<div class="r " style="left:1492px;top:455px;width:124px;height:20px;line-height:20px;">13332.64</div>
<div class="r " style="left:1620px;top:455px;width:124px;height:20px;line-height:20px;">-21.90</div>
<div class="r " style="left:1748px;top:455px;width:147px;height:20px;line-height:20px;">332.70</div>
<div style="left:181px;top:455px;width:1px;height:20px;background:#c4c4c4;"></div>
<div style="left:464px;top:455px;width:1px;height:20px;background:#c4c4c4;"></div>
<div style="left:592px;top:455px;width:1px;height:20px;background:#c4c4c4;"></div>
<div style="left:695px;top:455px;width:1px;height:20px;background:#c4c4c4;"></div>
<div style="left:823px;top:455px;width:1px;height:20px;background:#c4c4c4;"></div>
<div style="left:951px;top:455px;width:1px;height:20px;background:#c4c4c4;"></div>
<div style="left:1079px;top:455px;width:1px;height:20px;background:#c4c4c4;"></div>
<div style="left:1207px;top:455px;width:1px;height:20px;background:#c4c4c4;"></div>
<div style="left:1490px;top:455px;width:1px;height:20px;background:#c4c4c4;"></div>
<div style="left:1618px;top:455px;width:1px;height:20px;background:#c4c4c4;"></div>
<div style="left:1746px;top:455px;width:1px;height:20px;background:#c4c4c4;"></div>
<div style="left:16px;top:476px;width:1883px;height:21px;background:#ebebeb;border-bottom:1px solid #d0d0d0;"></div>
<svg style="left:19px;top:479px;" width="15" height="16" viewBox="0 0 15 16"><path d="M1.5 .5h7l3 3v10.5h-10z" fill="#fff" stroke="#555" stroke-width="1"/><path d="M8.5 .5v3h3" fill="#e8e8e8" stroke="#555" stroke-width="1"/><path d="M2 14.6h10" stroke="#999" stroke-width="1"/><circle cx="10.6" cy="11.6" r="3.1" fill="#f04a18" stroke="#b02a08" stroke-width=".7"/><circle cx="9.8" cy="10.6" r="1.1" fill="#fff" opacity=".45"/></svg>
<div style="left:38px;top:476px;width:140px;height:20px;line-height:20px;">61485720</div>
<div class="r " style="left:183px;top:476px;width:279px;height:20px;line-height:20px;">2021.05.10 22:53:10</div>
<div class="r " style="left:466px;top:476px;width:124px;height:20px;line-height:20px;">sell</div>
<div class="r " style="left:594px;top:476px;width:99px;height:20px;line-height:20px;">5.00</div>
<div class="r " style="left:697px;top:476px;width:124px;height:20px;line-height:20px;">usaind</div>
<div class="r " style="left:825px;top:476px;width:124px;height:20px;line-height:20px;">34703.51</div>
<div class="r " style="left:953px;top:476px;width:124px;height:20px;line-height:20px;">0.00</div>
<div class="r " style="left:1081px;top:476px;width:124px;height:20px;line-height:20px;">0.00</div>
<div class="r " style="left:1209px;top:476px;width:279px;height:20px;line-height:20px;">2021.05.11 02:42:51</div>
<div class="r " style="left:1492px;top:476px;width:124px;height:20px;line-height:20px;">34743.98</div>
<div class="r " style="left:1620px;top:476px;width:124px;height:20px;line-height:20px;">-9.52</div>
<div class="r " style="left:1748px;top:476px;width:147px;height:20px;line-height:20px;">-202.35</div>
<div style="left:181px;top:476px;width:1px;height:20px;background:#c4c4c4;"></div>
<div style="left:464px;top:476px;width:1px;height:20px;background:#c4c4c4;"></div>
<div style="left:592px;top:476px;width:1px;height:20px;background:#c4c4c4;"></div>
<div style="left:695px;top:476px;width:1px;height:20px;background:#c4c4c4;"></div>
<div style="left:823px;top:476px;width:1px;height:20px;background:#c4c4c4;"></div>
<div style="left:951px;top:476px;width:1px;height:20px;background:#c4c4c4;"></div>
<div style="left:1079px;top:476px;width:1px;height:20px;background:#c4c4c4;"></div>
<div style="left:1207px;top:476px;width:1px;height:20px;background:#c4c4c4;"></div>
<div style="left:1490px;top:476px;width:1px;height:20px;background:#c4c4c4;"></div>
<div style="left:1618px;top:476px;width:1px;height:20px;background:#c4c4c4;"></div>
<div style="left:1746px;top:476px;width:1px;height:20px;background:#c4c4c4;"></div>
<div style="left:16px;top:497px;width:1883px;height:21px;background:#fff;border-bottom:1px solid #d0d0d0;"></div>
<svg style="left:20px;top:501px;" width="12" height="15" viewBox="0 0 12 15"><rect x=".5" y=".5" width="9.5" height="12.5" fill="#fff" stroke="#888" stroke-width="1"/><path d="M10.8 1.500v12.300M1.500 13.800h9.300" stroke="#aaa" stroke-width="1" fill="none"/><path d="M3.700 3h3.200v3h1.900l-3.500 4-3.500-4h1.900z" fill="#e8300c" stroke="#a81c04" stroke-width=".6"/></svg>
<div style="left:38px;top:497px;width:140px;height:20px;line-height:20px;">61486795</div>
<div class="r " style="left:183px;top:497px;width:279px;height:20px;line-height:20px;">2021.05.10 23:03:07</div>
<div class="r " style="left:466px;top:497px;width:124px;height:20px;line-height:20px;">balance</div>
<div class="r " style="left:1300px;top:497px;width:445px;height:20px;line-height:20px;">5971716 DIVIDEND 61485594</div>
<div class="r " style="left:1750px;top:497px;width:145px;height:20px;line-height:20px;">-11.40</div>
<div style="left:181px;top:497px;width:1px;height:20px;background:#c4c4c4;"></div>
<div style="left:464px;top:497px;width:1px;height:20px;background:#c4c4c4;"></div>
<div style="left:592px;top:497px;width:1px;height:20px;background:#c4c4c4;"></div>
<div style="left:1746px;top:497px;width:1px;height:20px;background:#c4c4c4;"></div>
<div style="left:16px;top:518px;width:1883px;height:21px;background:#ebebeb;border-bottom:1px solid #d0d0d0;"></div>
<svg style="left:19px;top:521px;" width="15" height="16" viewBox="0 0 15 16"><path d="M1.5 .5h7l3 3v10.5h-10z" fill="#fff" stroke="#555" stroke-width="1"/><path d="M8.5 .5v3h3" fill="#e8e8e8" stroke="#555" stroke-width="1"/><path d="M2 14.6h10" stroke="#999" stroke-width="1"/><circle cx="10.6" cy="11.6" r="3.1" fill="#f04a18" stroke="#b02a08" stroke-width=".7"/><circle cx="9.8" cy="10.6" r="1.1" fill="#fff" opacity=".45"/></svg>
<div style="left:38px;top:518px;width:140px;height:20px;line-height:20px;">61487234</div>
<div class="r " style="left:183px;top:518px;width:279px;height:20px;line-height:20px;">2021.05.11 00:06:07</div>
<div class="r " style="left:466px;top:518px;width:124px;height:20px;line-height:20px;">sell</div>
<div class="r " style="left:594px;top:518px;width:99px;height:20px;line-height:20px;">30.00</div>
<div class="r " style="left:697px;top:518px;width:124px;height:20px;line-height:20px;">usatec</div>
<div class="r " style="left:825px;top:518px;width:124px;height:20px;line-height:20px;">13328.15</div>
<div class="r " style="left:953px;top:518px;width:124px;height:20px;line-height:20px;">0.00</div>
<div class="r " style="left:1081px;top:518px;width:124px;height:20px;line-height:20px;">0.00</div>
<div class="r " style="left:1209px;top:518px;width:279px;height:20px;line-height:20px;">2021.05.11 00:55:02</div>
<div class="r " style="left:1492px;top:518px;width:124px;height:20px;line-height:20px;">13339.59</div>
<div class="r " style="left:1620px;top:518px;width:124px;height:20px;line-height:20px;">0.00</div>
<div class="r " style="left:1748px;top:518px;width:147px;height:20px;line-height:20px;">-343.20</div>
<div style="left:181px;top:518px;width:1px;height:20px;background:#c4c4c4;"></div>
<div style="left:464px;top:518px;width:1px;height:20px;background:#c4c4c4;"></div>
<div style="left:592px;top:518px;width:1px;height:20px;background:#c4c4c4;"></div>
<div style="left:695px;top:518px;width:1px;height:20px;background:#c4c4c4;"></div>
<div style="left:823px;top:518px;width:1px;height:20px;background:#c4c4c4;"></div>
<div style="left:951px;top:518px;width:1px;height:20px;background:#c4c4c4;"></div>
<div style="left:1079px;top:518px;width:1px;height:20px;background:#c4c4c4;"></div>
<div style="left:1207px;top:518px;width:1px;height:20px;background:#c4c4c4;"></div>
<div style="left:1490px;top:518px;width:1px;height:20px;background:#c4c4c4;"></div>
<div style="left:1618px;top:518px;width:1px;height:20px;background:#c4c4c4;"></div>
<div style="left:1746px;top:518px;width:1px;height:20px;background:#c4c4c4;"></div>
<div style="left:16px;top:539px;width:1883px;height:21px;background:#fff;border-bottom:1px solid #d0d0d0;"></div>
<svg style="left:19px;top:542px;" width="15" height="16" viewBox="0 0 15 16"><path d="M1.5 .5h7l3 3v10.5h-10z" fill="#fff" stroke="#555" stroke-width="1"/><path d="M8.5 .5v3h3" fill="#e8e8e8" stroke="#555" stroke-width="1"/><path d="M2 14.6h10" stroke="#999" stroke-width="1"/><circle cx="10.6" cy="11.6" r="3.1" fill="#f04a18" stroke="#b02a08" stroke-width=".7"/><circle cx="9.8" cy="10.6" r="1.1" fill="#fff" opacity=".45"/></svg>
<div style="left:38px;top:539px;width:140px;height:20px;line-height:20px;">61488078</div>
<div class="r " style="left:183px;top:539px;width:279px;height:20px;line-height:20px;">2021.05.11 01:27:39</div>
<div class="r " style="left:466px;top:539px;width:124px;height:20px;line-height:20px;">sell</div>
<div class="r " style="left:594px;top:539px;width:99px;height:20px;line-height:20px;">30.00</div>
<div class="r " style="left:697px;top:539px;width:124px;height:20px;line-height:20px;">usatec</div>
<div class="r " style="left:825px;top:539px;width:124px;height:20px;line-height:20px;">13334.47</div>
<div class="r " style="left:953px;top:539px;width:124px;height:20px;line-height:20px;">0.00</div>
<div class="r " style="left:1081px;top:539px;width:124px;height:20px;line-height:20px;">0.00</div>
<div class="r " style="left:1209px;top:539px;width:279px;height:20px;line-height:20px;">2021.05.11 01:46:30</div>
<div class="r " style="left:1492px;top:539px;width:124px;height:20px;line-height:20px;">13336.40</div>
<div class="r " style="left:1620px;top:539px;width:124px;height:20px;line-height:20px;">0.00</div>
<div class="r " style="left:1748px;top:539px;width:147px;height:20px;line-height:20px;">-57.90</div>
<div style="left:181px;top:539px;width:1px;height:20px;background:#c4c4c4;"></div>
<div style="left:464px;top:539px;width:1px;height:20px;background:#c4c4c4;"></div>
<div style="left:592px;top:539px;width:1px;height:20px;background:#c4c4c4;"></div>
<div style="left:695px;top:539px;width:1px;height:20px;background:#c4c4c4;"></div>
<div style="left:823px;top:539px;width:1px;height:20px;background:#c4c4c4;"></div>
<div style="left:951px;top:539px;width:1px;height:20px;background:#c4c4c4;"></div>
<div style="left:1079px;top:539px;width:1px;height:20px;background:#c4c4c4;"></div>
<div style="left:1207px;top:539px;width:1px;height:20px;background:#c4c4c4;"></div>
<div style="left:1490px;top:539px;width:1px;height:20px;background:#c4c4c4;"></div>
<div style="left:1618px;top:539px;width:1px;height:20px;background:#c4c4c4;"></div>
<div style="left:1746px;top:539px;width:1px;height:20px;background:#c4c4c4;"></div>
<div style="left:16px;top:560px;width:1883px;height:21px;background:#ebebeb;border-bottom:1px solid #d0d0d0;"></div>
<svg style="left:19px;top:563px;" width="15" height="16" viewBox="0 0 15 16"><path d="M1.5 .5h7l3 3v10.5h-10z" fill="#fff" stroke="#555" stroke-width="1"/><path d="M8.5 .5v3h3" fill="#e8e8e8" stroke="#555" stroke-width="1"/><path d="M2 14.6h10" stroke="#999" stroke-width="1"/><circle cx="10.6" cy="11.6" r="3.1" fill="#f04a18" stroke="#b02a08" stroke-width=".7"/><circle cx="9.8" cy="10.6" r="1.1" fill="#fff" opacity=".45"/></svg>
<div style="left:38px;top:560px;width:140px;height:20px;line-height:20px;">61488553</div>
<div class="r " style="left:183px;top:560px;width:279px;height:20px;line-height:20px;">2021.05.11 02:18:25</div>
<div class="r " style="left:466px;top:560px;width:124px;height:20px;line-height:20px;">sell</div>
<div class="r " style="left:594px;top:560px;width:99px;height:20px;line-height:20px;">30.00</div>
<div class="r " style="left:697px;top:560px;width:124px;height:20px;line-height:20px;">usatec</div>
<div class="r " style="left:825px;top:560px;width:124px;height:20px;line-height:20px;">13337.35</div>
<div class="r " style="left:953px;top:560px;width:124px;height:20px;line-height:20px;">0.00</div>
<div class="r " style="left:1081px;top:560px;width:124px;height:20px;line-height:20px;">0.00</div>
<div class="r " style="left:1209px;top:560px;width:279px;height:20px;line-height:20px;">2021.05.11 02:42:01</div>
<div class="r " style="left:1492px;top:560px;width:124px;height:20px;line-height:20px;">13308.10</div>
<div class="r " style="left:1620px;top:560px;width:124px;height:20px;line-height:20px;">0.00</div>
<div class="r " style="left:1748px;top:560px;width:147px;height:20px;line-height:20px;">877.50</div>
<div style="left:181px;top:560px;width:1px;height:20px;background:#c4c4c4;"></div>
<div style="left:464px;top:560px;width:1px;height:20px;background:#c4c4c4;"></div>
<div style="left:592px;top:560px;width:1px;height:20px;background:#c4c4c4;"></div>
<div style="left:695px;top:560px;width:1px;height:20px;background:#c4c4c4;"></div>
<div style="left:823px;top:560px;width:1px;height:20px;background:#c4c4c4;"></div>
<div style="left:951px;top:560px;width:1px;height:20px;background:#c4c4c4;"></div>
<div style="left:1079px;top:560px;width:1px;height:20px;background:#c4c4c4;"></div>
<div style="left:1207px;top:560px;width:1px;height:20px;background:#c4c4c4;"></div>
<div style="left:1490px;top:560px;width:1px;height:20px;background:#c4c4c4;"></div>
<div style="left:1618px;top:560px;width:1px;height:20px;background:#c4c4c4;"></div>
<div style="left:1746px;top:560px;width:1px;height:20px;background:#c4c4c4;"></div>
<div style="left:16px;top:581px;width:1883px;height:21px;background:#fff;border-bottom:1px solid #d0d0d0;"></div>
<svg style="left:19px;top:584px;" width="15" height="16" viewBox="0 0 15 16"><path d="M1.5 .5h7l3 3v10.5h-10z" fill="#fff" stroke="#555" stroke-width="1"/><path d="M8.5 .5v3h3" fill="#e8e8e8" stroke="#555" stroke-width="1"/><path d="M2 14.6h10" stroke="#999" stroke-width="1"/><circle cx="10.6" cy="11.6" r="3.1" fill="#f04a18" stroke="#b02a08" stroke-width=".7"/><circle cx="9.8" cy="10.6" r="1.1" fill="#fff" opacity=".45"/></svg>
<div style="left:38px;top:581px;width:140px;height:20px;line-height:20px;">61489028</div>
<div class="r " style="left:183px;top:581px;width:279px;height:20px;line-height:20px;">2021.05.11 02:48:01</div>
<div class="r " style="left:466px;top:581px;width:124px;height:20px;line-height:20px;">sell</div>
<div class="r " style="left:594px;top:581px;width:99px;height:20px;line-height:20px;">30.00</div>
<div class="r " style="left:697px;top:581px;width:124px;height:20px;line-height:20px;">usatec</div>
<div class="r " style="left:825px;top:581px;width:124px;height:20px;line-height:20px;">13298.45</div>
<div class="r " style="left:953px;top:581px;width:124px;height:20px;line-height:20px;">0.00</div>
<div class="r " style="left:1081px;top:581px;width:124px;height:20px;line-height:20px;">0.00</div>
<div class="r " style="left:1209px;top:581px;width:279px;height:20px;line-height:20px;">2021.05.11 02:54:00</div>
<div class="r " style="left:1492px;top:581px;width:124px;height:20px;line-height:20px;">13266.86</div>
<div class="r " style="left:1620px;top:581px;width:124px;height:20px;line-height:20px;">0.00</div>
<div class="r " style="left:1748px;top:581px;width:147px;height:20px;line-height:20px;">947.70</div>
<div style="left:181px;top:581px;width:1px;height:20px;background:#c4c4c4;"></div>
<div style="left:464px;top:581px;width:1px;height:20px;background:#c4c4c4;"></div>
<div style="left:592px;top:581px;width:1px;height:20px;background:#c4c4c4;"></div>
<div style="left:695px;top:581px;width:1px;height:20px;background:#c4c4c4;"></div>
<div style="left:823px;top:581px;width:1px;height:20px;background:#c4c4c4;"></div>
<div style="left:951px;top:581px;width:1px;height:20px;background:#c4c4c4;"></div>
<div style="left:1079px;top:581px;width:1px;height:20px;background:#c4c4c4;"></div>
<div style="left:1207px;top:581px;width:1px;height:20px;background:#c4c4c4;"></div>
<div style="left:1490px;top:581px;width:1px;height:20px;background:#c4c4c4;"></div>
<div style="left:1618px;top:581px;width:1px;height:20px;background:#c4c4c4;"></div>
<div style="left:1746px;top:581px;width:1px;height:20px;background:#c4c4c4;"></div>
<div style="left:16px;top:602px;width:1883px;height:21px;background:#ebebeb;border-bottom:1px solid #d0d0d0;"></div>
<svg style="left:19px;top:605px;" width="15" height="16" viewBox="0 0 15 16"><path d="M1.5 .5h7l3 3v10.5h-10z" fill="#fff" stroke="#555" stroke-width="1"/><path d="M8.5 .5v3h3" fill="#e8e8e8" stroke="#555" stroke-width="1"/><path d="M2 14.6h10" stroke="#999" stroke-width="1"/><circle cx="10.6" cy="11.6" r="3.1" fill="#f04a18" stroke="#b02a08" stroke-width=".7"/><circle cx="9.8" cy="10.6" r="1.1" fill="#fff" opacity=".45"/></svg>
<div style="left:38px;top:602px;width:140px;height:20px;line-height:20px;">61489515</div>
<div class="r " style="left:183px;top:602px;width:279px;height:20px;line-height:20px;">2021.05.11 02:56:23</div>
<div class="r " style="left:466px;top:602px;width:124px;height:20px;line-height:20px;">sell</div>
<div class="r " style="left:594px;top:602px;width:99px;height:20px;line-height:20px;">30.00</div>
<div class="r " style="left:697px;top:602px;width:124px;height:20px;line-height:20px;">usatec</div>
<div class="r " style="left:825px;top:602px;width:124px;height:20px;line-height:20px;">13225.39</div>
<div class="r " style="left:953px;top:602px;width:124px;height:20px;line-height:20px;">0.00</div>
<div class="r " style="left:1081px;top:602px;width:124px;height:20px;line-height:20px;">0.00</div>
<div class="r " style="left:1209px;top:602px;width:279px;height:20px;line-height:20px;">2021.05.11 03:04:17</div>
<div class="r " style="left:1492px;top:602px;width:124px;height:20px;line-height:20px;">13207.09</div>
<div class="r " style="left:1620px;top:602px;width:124px;height:20px;line-height:20px;">0.00</div>
<div class="r " style="left:1748px;top:602px;width:147px;height:20px;line-height:20px;">549.00</div>
<div style="left:181px;top:602px;width:1px;height:20px;background:#c4c4c4;"></div>
<div style="left:464px;top:602px;width:1px;height:20px;background:#c4c4c4;"></div>
<div style="left:592px;top:602px;width:1px;height:20px;background:#c4c4c4;"></div>
<div style="left:695px;top:602px;width:1px;height:20px;background:#c4c4c4;"></div>
<div style="left:823px;top:602px;width:1px;height:20px;background:#c4c4c4;"></div>
<div style="left:951px;top:602px;width:1px;height:20px;background:#c4c4c4;"></div>
<div style="left:1079px;top:602px;width:1px;height:20px;background:#c4c4c4;"></div>
<div style="left:1207px;top:602px;width:1px;height:20px;background:#c4c4c4;"></div>
<div style="left:1490px;top:602px;width:1px;height:20px;background:#c4c4c4;"></div>
<div style="left:1618px;top:602px;width:1px;height:20px;background:#c4c4c4;"></div>
<div style="left:1746px;top:602px;width:1px;height:20px;background:#c4c4c4;"></div>
<div style="left:16px;top:623px;width:1883px;height:21px;background:#fff;border-bottom:1px solid #d0d0d0;"></div>
<svg style="left:19px;top:626px;" width="15" height="16" viewBox="0 0 15 16"><path d="M1.5 .5h7l3 3v10.5h-10z" fill="#fff" stroke="#555" stroke-width="1"/><path d="M8.5 .5v3h3" fill="#e8e8e8" stroke="#555" stroke-width="1"/><path d="M2 14.6h10" stroke="#999" stroke-width="1"/><circle cx="10.6" cy="11.6" r="3.1" fill="#f04a18" stroke="#b02a08" stroke-width=".7"/><circle cx="9.8" cy="10.6" r="1.1" fill="#fff" opacity=".45"/></svg>
<div style="left:38px;top:623px;width:140px;height:20px;line-height:20px;">61490191</div>
<div class="r " style="left:183px;top:623px;width:279px;height:20px;line-height:20px;">2021.05.11 03:25:30</div>
<div class="r " style="left:466px;top:623px;width:124px;height:20px;line-height:20px;">sell</div>
<div class="r " style="left:594px;top:623px;width:99px;height:20px;line-height:20px;">30.00</div>
<div class="r " style="left:697px;top:623px;width:124px;height:20px;line-height:20px;">usatec</div>
<div class="r " style="left:825px;top:623px;width:124px;height:20px;line-height:20px;">13217.38</div>
<div class="r " style="left:953px;top:623px;width:124px;height:20px;line-height:20px;">0.00</div>
<div class="r " style="left:1081px;top:623px;width:124px;height:20px;line-height:20px;">0.00</div>
<div class="r " style="left:1209px;top:623px;width:279px;height:20px;line-height:20px;">2021.05.11 03:33:57</div>
<div class="r " style="left:1492px;top:623px;width:124px;height:20px;line-height:20px;">13218.85</div>
<div class="r " style="left:1620px;top:623px;width:124px;height:20px;line-height:20px;">0.00</div>
<div class="r " style="left:1748px;top:623px;width:147px;height:20px;line-height:20px;">-44.10</div>
<div style="left:181px;top:623px;width:1px;height:20px;background:#c4c4c4;"></div>
<div style="left:464px;top:623px;width:1px;height:20px;background:#c4c4c4;"></div>
<div style="left:592px;top:623px;width:1px;height:20px;background:#c4c4c4;"></div>
<div style="left:695px;top:623px;width:1px;height:20px;background:#c4c4c4;"></div>
<div style="left:823px;top:623px;width:1px;height:20px;background:#c4c4c4;"></div>
<div style="left:951px;top:623px;width:1px;height:20px;background:#c4c4c4;"></div>
<div style="left:1079px;top:623px;width:1px;height:20px;background:#c4c4c4;"></div>
<div style="left:1207px;top:623px;width:1px;height:20px;background:#c4c4c4;"></div>
<div style="left:1490px;top:623px;width:1px;height:20px;background:#c4c4c4;"></div>
<div style="left:1618px;top:623px;width:1px;height:20px;background:#c4c4c4;"></div>
<div style="left:1746px;top:623px;width:1px;height:20px;background:#c4c4c4;"></div>
<div style="left:16px;top:644px;width:1883px;height:21px;background:#ebebeb;border-bottom:1px solid #d0d0d0;"></div>
<svg style="left:19px;top:647px;" width="15" height="16" viewBox="0 0 15 16"><path d="M1.5 .5h7l3 3v10.5h-10z" fill="#fff" stroke="#555" stroke-width="1"/><path d="M8.5 .5v3h3" fill="#e8e8e8" stroke="#555" stroke-width="1"/><path d="M2 14.6h10" stroke="#999" stroke-width="1"/><circle cx="10.6" cy="11.6" r="3.1" fill="#f04a18" stroke="#b02a08" stroke-width=".7"/><circle cx="9.8" cy="10.6" r="1.1" fill="#fff" opacity=".45"/></svg>
<div style="left:38px;top:644px;width:140px;height:20px;line-height:20px;">61490412</div>
<div class="r " style="left:183px;top:644px;width:279px;height:20px;line-height:20px;">2021.05.11 03:40:30</div>
<div class="r " style="left:466px;top:644px;width:124px;height:20px;line-height:20px;">sell</div>
<div class="r " style="left:594px;top:644px;width:99px;height:20px;line-height:20px;">30.00</div>
<div class="r " style="left:697px;top:644px;width:124px;height:20px;line-height:20px;">usatec</div>
<div class="r " style="left:825px;top:644px;width:124px;height:20px;line-height:20px;">13206.98</div>
<div class="r " style="left:953px;top:644px;width:124px;height:20px;line-height:20px;">0.00</div>
<div class="r " style="left:1081px;top:644px;width:124px;height:20px;line-height:20px;">0.00</div>
<div class="r " style="left:1209px;top:644px;width:279px;height:20px;line-height:20px;">2021.05.11 03:47:45</div>
<div class="r " style="left:1492px;top:644px;width:124px;height:20px;line-height:20px;">13213.57</div>
<div class="r " style="left:1620px;top:644px;width:124px;height:20px;line-height:20px;">0.00</div>
<div class="r " style="left:1748px;top:644px;width:147px;height:20px;line-height:20px;">-197.70</div>
<div style="left:181px;top:644px;width:1px;height:20px;background:#c4c4c4;"></div>
<div style="left:464px;top:644px;width:1px;height:20px;background:#c4c4c4;"></div>
<div style="left:592px;top:644px;width:1px;height:20px;background:#c4c4c4;"></div>
<div style="left:695px;top:644px;width:1px;height:20px;background:#c4c4c4;"></div>
<div style="left:823px;top:644px;width:1px;height:20px;background:#c4c4c4;"></div>
<div style="left:951px;top:644px;width:1px;height:20px;background:#c4c4c4;"></div>
<div style="left:1079px;top:644px;width:1px;height:20px;background:#c4c4c4;"></div>
<div style="left:1207px;top:644px;width:1px;height:20px;background:#c4c4c4;"></div>
<div style="left:1490px;top:644px;width:1px;height:20px;background:#c4c4c4;"></div>
<div style="left:1618px;top:644px;width:1px;height:20px;background:#c4c4c4;"></div>
<div style="left:1746px;top:644px;width:1px;height:20px;background:#c4c4c4;"></div>
<div style="left:16px;top:665px;width:1883px;height:21px;background:#fff;border-bottom:1px solid #d0d0d0;"></div>
<svg style="left:19px;top:668px;" width="15" height="16" viewBox="0 0 15 16"><path d="M1.5 .5h7l3 3v10.5h-10z" fill="#fff" stroke="#555" stroke-width="1"/><path d="M8.5 .5v3h3" fill="#e8e8e8" stroke="#555" stroke-width="1"/><path d="M2 14.6h10" stroke="#999" stroke-width="1"/><circle cx="10.6" cy="11.6" r="3.1" fill="#f04a18" stroke="#b02a08" stroke-width=".7"/><circle cx="9.8" cy="10.6" r="1.1" fill="#fff" opacity=".45"/></svg>
<div style="left:38px;top:665px;width:140px;height:20px;line-height:20px;">61490720</div>
<div class="r " style="left:183px;top:665px;width:279px;height:20px;line-height:20px;">2021.05.11 04:00:39</div>
<div class="r " style="left:466px;top:665px;width:124px;height:20px;line-height:20px;">sell</div>
<div class="r " style="left:594px;top:665px;width:99px;height:20px;line-height:20px;">30.00</div>
<div class="r " style="left:697px;top:665px;width:124px;height:20px;line-height:20px;">usatec</div>
<div class="r " style="left:825px;top:665px;width:124px;height:20px;line-height:20px;">13208.38</div>
<div class="r " style="left:953px;top:665px;width:124px;height:20px;line-height:20px;">0.00</div>
<div class="r " style="left:1081px;top:665px;width:124px;height:20px;line-height:20px;">0.00</div>
<div class="r " style="left:1209px;top:665px;width:279px;height:20px;line-height:20px;">2021.05.11 04:25:02</div>
<div class="r " style="left:1492px;top:665px;width:124px;height:20px;line-height:20px;">13201.10</div>
<div class="r " style="left:1620px;top:665px;width:124px;height:20px;line-height:20px;">0.00</div>
<div class="r " style="left:1748px;top:665px;width:147px;height:20px;line-height:20px;">218.40</div>
<div style="left:181px;top:665px;width:1px;height:20px;background:#c4c4c4;"></div>
<div style="left:464px;top:665px;width:1px;height:20px;background:#c4c4c4;"></div>
<div style="left:592px;top:665px;width:1px;height:20px;background:#c4c4c4;"></div>
<div style="left:695px;top:665px;width:1px;height:20px;background:#c4c4c4;"></div>
<div style="left:823px;top:665px;width:1px;height:20px;background:#c4c4c4;"></div>
<div style="left:951px;top:665px;width:1px;height:20px;background:#c4c4c4;"></div>
<div style="left:1079px;top:665px;width:1px;height:20px;background:#c4c4c4;"></div>
<div style="left:1207px;top:665px;width:1px;height:20px;background:#c4c4c4;"></div>
<div style="left:1490px;top:665px;width:1px;height:20px;background:#c4c4c4;"></div>
<div style="left:1618px;top:665px;width:1px;height:20px;background:#c4c4c4;"></div>
<div style="left:1746px;top:665px;width:1px;height:20px;background:#c4c4c4;"></div>
<div style="left:16px;top:686px;width:1883px;height:21px;background:#ebebeb;border-bottom:1px solid #d0d0d0;"></div>
<svg style="left:19px;top:689px;" width="15" height="16" viewBox="0 0 15 16"><path d="M1.5 .5h7l3 3v10.5h-10z" fill="#fff" stroke="#555" stroke-width="1"/><path d="M8.5 .5v3h3" fill="#e8e8e8" stroke="#555" stroke-width="1"/><path d="M2 14.6h10" stroke="#999" stroke-width="1"/><circle cx="10.6" cy="11.6" r="3.1" fill="#1e90e8" stroke="#0b5fb0" stroke-width=".7"/><circle cx="9.8" cy="10.6" r="1.1" fill="#fff" opacity=".45"/></svg>
<div style="left:38px;top:686px;width:140px;height:20px;line-height:20px;">61491172</div>
<div class="r " style="left:183px;top:686px;width:279px;height:20px;line-height:20px;">2021.05.11 04:34:00</div>
<div class="r " style="left:466px;top:686px;width:124px;height:20px;line-height:20px;">buy</div>
<div class="r " style="left:594px;top:686px;width:99px;height:20px;line-height:20px;">30.00</div>
<div class="r " style="left:697px;top:686px;width:124px;height:20px;line-height:20px;">usatec</div>
<div class="r " style="left:825px;top:686px;width:124px;height:20px;line-height:20px;">13218.37</div>
<div class="r " style="left:953px;top:686px;width:124px;height:20px;line-height:20px;">0.00</div>
<div class="r " style="left:1081px;top:686px;width:124px;height:20px;line-height:20px;">0.00</div>
<div class="r " style="left:1209px;top:686px;width:279px;height:20px;line-height:20px;">2021.05.11 04:49:52</div>
<div class="r " style="left:1492px;top:686px;width:124px;height:20px;line-height:20px;">13220.67</div>
<div class="r " style="left:1620px;top:686px;width:124px;height:20px;line-height:20px;">0.00</div>
<div class="r " style="left:1748px;top:686px;width:147px;height:20px;line-height:20px;">69.00</div>
<div style="left:181px;top:686px;width:1px;height:20px;background:#c4c4c4;"></div>
<div style="left:464px;top:686px;width:1px;height:20px;background:#c4c4c4;"></div>
<div style="left:592px;top:686px;width:1px;height:20px;background:#c4c4c4;"></div>
<div style="left:695px;top:686px;width:1px;height:20px;background:#c4c4c4;"></div>
<div style="left:823px;top:686px;width:1px;height:20px;background:#c4c4c4;"></div>
<div style="left:951px;top:686px;width:1px;height:20px;background:#c4c4c4;"></div>
<div style="left:1079px;top:686px;width:1px;height:20px;background:#c4c4c4;"></div>
<div style="left:1207px;top:686px;width:1px;height:20px;background:#c4c4c4;"></div>
<div style="left:1490px;top:686px;width:1px;height:20px;background:#c4c4c4;"></div>
<div style="left:1618px;top:686px;width:1px;height:20px;background:#c4c4c4;"></div>
<div style="left:1746px;top:686px;width:1px;height:20px;background:#c4c4c4;"></div>
<div style="left:16px;top:707px;width:1883px;height:21px;background:#fff;border-bottom:1px solid #d0d0d0;"></div>
<svg style="left:19px;top:710px;" width="15" height="16" viewBox="0 0 15 16"><path d="M1.5 .5h7l3 3v10.5h-10z" fill="#fff" stroke="#555" stroke-width="1"/><path d="M8.5 .5v3h3" fill="#e8e8e8" stroke="#555" stroke-width="1"/><path d="M2 14.6h10" stroke="#999" stroke-width="1"/><circle cx="10.6" cy="11.6" r="3.1" fill="#1e90e8" stroke="#0b5fb0" stroke-width=".7"/><circle cx="9.8" cy="10.6" r="1.1" fill="#fff" opacity=".45"/></svg>
<div style="left:38px;top:707px;width:140px;height:20px;line-height:20px;">61492852</div>
<div class="r " style="left:183px;top:707px;width:279px;height:20px;line-height:20px;">2021.05.11 07:06:01</div>
<div class="r " style="left:466px;top:707px;width:124px;height:20px;line-height:20px;">buy</div>
<div class="r " style="left:594px;top:707px;width:99px;height:20px;line-height:20px;">30.00</div>
<div class="r " style="left:697px;top:707px;width:124px;height:20px;line-height:20px;">usatec</div>
<div class="r " style="left:825px;top:707px;width:124px;height:20px;line-height:20px;">13241.87</div>
<div class="r " style="left:953px;top:707px;width:124px;height:20px;line-height:20px;">0.00</div>
<div class="r " style="left:1081px;top:707px;width:124px;height:20px;line-height:20px;">0.00</div>
<div class="r " style="left:1209px;top:707px;width:279px;height:20px;line-height:20px;">2021.05.11 07:36:07</div>
<div class="r " style="left:1492px;top:707px;width:124px;height:20px;line-height:20px;">13251.65</div>
<div class="r " style="left:1620px;top:707px;width:124px;height:20px;line-height:20px;">0.00</div>
<div class="r " style="left:1748px;top:707px;width:147px;height:20px;line-height:20px;">293.40</div>
<div style="left:181px;top:707px;width:1px;height:20px;background:#c4c4c4;"></div>
<div style="left:464px;top:707px;width:1px;height:20px;background:#c4c4c4;"></div>
<div style="left:592px;top:707px;width:1px;height:20px;background:#c4c4c4;"></div>
<div style="left:695px;top:707px;width:1px;height:20px;background:#c4c4c4;"></div>
<div style="left:823px;top:707px;width:1px;height:20px;background:#c4c4c4;"></div>
<div style="left:951px;top:707px;width:1px;height:20px;background:#c4c4c4;"></div>
<div style="left:1079px;top:707px;width:1px;height:20px;background:#c4c4c4;"></div>
<div style="left:1207px;top:707px;width:1px;height:20px;background:#c4c4c4;"></div>
<div style="left:1490px;top:707px;width:1px;height:20px;background:#c4c4c4;"></div>
<div style="left:1618px;top:707px;width:1px;height:20px;background:#c4c4c4;"></div>
<div style="left:1746px;top:707px;width:1px;height:20px;background:#c4c4c4;"></div>
<div style="left:16px;top:728px;width:1883px;height:21px;background:#ebebeb;border-bottom:1px solid #d0d0d0;"></div>
<svg style="left:19px;top:731px;" width="15" height="16" viewBox="0 0 15 16"><path d="M1.5 .5h7l3 3v10.5h-10z" fill="#fff" stroke="#555" stroke-width="1"/><path d="M8.5 .5v3h3" fill="#e8e8e8" stroke="#555" stroke-width="1"/><path d="M2 14.6h10" stroke="#999" stroke-width="1"/><circle cx="10.6" cy="11.6" r="3.1" fill="#1e90e8" stroke="#0b5fb0" stroke-width=".7"/><circle cx="9.8" cy="10.6" r="1.1" fill="#fff" opacity=".45"/></svg>
<div style="left:38px;top:728px;width:140px;height:20px;line-height:20px;">61493683</div>
<div class="r " style="left:183px;top:728px;width:279px;height:20px;line-height:20px;">2021.05.11 07:45:37</div>
<div class="r " style="left:466px;top:728px;width:124px;height:20px;line-height:20px;">buy</div>
<div class="r " style="left:594px;top:728px;width:99px;height:20px;line-height:20px;">30.00</div>
<div class="r " style="left:697px;top:728px;width:124px;height:20px;line-height:20px;">usatec</div>
<div class="r " style="left:825px;top:728px;width:124px;height:20px;line-height:20px;">13276.15</div>
<div class="r " style="left:953px;top:728px;width:124px;height:20px;line-height:20px;">0.00</div>
<div class="r " style="left:1081px;top:728px;width:124px;height:20px;line-height:20px;">0.00</div>
<div class="r " style="left:1209px;top:728px;width:279px;height:20px;line-height:20px;">2021.05.11 08:02:28</div>
<div class="r " style="left:1492px;top:728px;width:124px;height:20px;line-height:20px;">13274.68</div>
<div class="r " style="left:1620px;top:728px;width:124px;height:20px;line-height:20px;">0.00</div>
<div class="r " style="left:1748px;top:728px;width:147px;height:20px;line-height:20px;">-44.10</div>
<div style="left:181px;top:728px;width:1px;height:20px;background:#c4c4c4;"></div>
<div style="left:464px;top:728px;width:1px;height:20px;background:#c4c4c4;"></div>
<div style="left:592px;top:728px;width:1px;height:20px;background:#c4c4c4;"></div>
<div style="left:695px;top:728px;width:1px;height:20px;background:#c4c4c4;"></div>
<div style="left:823px;top:728px;width:1px;height:20px;background:#c4c4c4;"></div>
<div style="left:951px;top:728px;width:1px;height:20px;background:#c4c4c4;"></div>
<div style="left:1079px;top:728px;width:1px;height:20px;background:#c4c4c4;"></div>
<div style="left:1207px;top:728px;width:1px;height:20px;background:#c4c4c4;"></div>
<div style="left:1490px;top:728px;width:1px;height:20px;background:#c4c4c4;"></div>
<div style="left:1618px;top:728px;width:1px;height:20px;background:#c4c4c4;"></div>
<div style="left:1746px;top:728px;width:1px;height:20px;background:#c4c4c4;"></div>
<div style="left:16px;top:749px;width:1883px;height:21px;background:#fff;border-bottom:1px solid #d0d0d0;"></div>
<svg style="left:19px;top:752px;" width="15" height="16" viewBox="0 0 15 16"><path d="M1.5 .5h7l3 3v10.5h-10z" fill="#fff" stroke="#555" stroke-width="1"/><path d="M8.5 .5v3h3" fill="#e8e8e8" stroke="#555" stroke-width="1"/><path d="M2 14.6h10" stroke="#999" stroke-width="1"/><circle cx="10.6" cy="11.6" r="3.1" fill="#f04a18" stroke="#b02a08" stroke-width=".7"/><circle cx="9.8" cy="10.6" r="1.1" fill="#fff" opacity=".45"/></svg>
<div style="left:38px;top:749px;width:140px;height:20px;line-height:20px;">61495138</div>
<div class="r " style="left:183px;top:749px;width:279px;height:20px;line-height:20px;">2021.05.11 08:32:10</div>
<div class="r " style="left:466px;top:749px;width:124px;height:20px;line-height:20px;">sell</div>
<div class="r " style="left:594px;top:749px;width:99px;height:20px;line-height:20px;">10.00</div>
<div class="r " style="left:697px;top:749px;width:124px;height:20px;line-height:20px;">ger30</div>
<div class="r " style="left:825px;top:749px;width:124px;height:20px;line-height:20px;">15198.69</div>
<div class="r " style="left:953px;top:749px;width:124px;height:20px;line-height:20px;">0.00</div>
<div class="r " style="left:1081px;top:749px;width:124px;height:20px;line-height:20px;">0.00</div>
<div class="r " style="left:1209px;top:749px;width:279px;height:20px;line-height:20px;">2021.05.11 08:39:14</div>
<div class="r " style="left:1492px;top:749px;width:124px;height:20px;line-height:20px;">15216.93</div>
<div class="r " style="left:1620px;top:749px;width:124px;height:20px;line-height:20px;">0.00</div>
<div class="r " style="left:1748px;top:749px;width:147px;height:20px;line-height:20px;">-222.05</div>
<div style="left:181px;top:749px;width:1px;height:20px;background:#c4c4c4;"></div>
<div style="left:464px;top:749px;width:1px;height:20px;background:#c4c4c4;"></div>
<div style="left:592px;top:749px;width:1px;height:20px;background:#c4c4c4;"></div>
<div style="left:695px;top:749px;width:1px;height:20px;background:#c4c4c4;"></div>
<div style="left:823px;top:749px;width:1px;height:20px;background:#c4c4c4;"></div>
<div style="left:951px;top:749px;width:1px;height:20px;background:#c4c4c4;"></div>
<div style="left:1079px;top:749px;width:1px;height:20px;background:#c4c4c4;"></div>
<div style="left:1207px;top:749px;width:1px;height:20px;background:#c4c4c4;"></div>
<div style="left:1490px;top:749px;width:1px;height:20px;background:#c4c4c4;"></div>
<div style="left:1618px;top:749px;width:1px;height:20px;background:#c4c4c4;"></div>
<div style="left:1746px;top:749px;width:1px;height:20px;background:#c4c4c4;"></div>
<div style="left:16px;top:770px;width:1883px;height:21px;background:#ebebeb;border-bottom:1px solid #d0d0d0;"></div>
<svg style="left:19px;top:773px;" width="15" height="16" viewBox="0 0 15 16"><path d="M1.5 .5h7l3 3v10.5h-10z" fill="#fff" stroke="#555" stroke-width="1"/><path d="M8.5 .5v3h3" fill="#e8e8e8" stroke="#555" stroke-width="1"/><path d="M2 14.6h10" stroke="#999" stroke-width="1"/><circle cx="10.6" cy="11.6" r="3.1" fill="#f04a18" stroke="#b02a08" stroke-width=".7"/><circle cx="9.8" cy="10.6" r="1.1" fill="#fff" opacity=".45"/></svg>
<div style="left:38px;top:770px;width:140px;height:20px;line-height:20px;">61496139</div>
<div class="r " style="left:183px;top:770px;width:279px;height:20px;line-height:20px;">2021.05.11 09:06:28</div>
<div class="r " style="left:466px;top:770px;width:124px;height:20px;line-height:20px;">sell</div>
<div class="r " style="left:594px;top:770px;width:99px;height:20px;line-height:20px;">30.00</div>
<div class="r " style="left:697px;top:770px;width:124px;height:20px;line-height:20px;">usatec</div>
<div class="r " style="left:825px;top:770px;width:124px;height:20px;line-height:20px;">13253.94</div>
<div class="r " style="left:953px;top:770px;width:124px;height:20px;line-height:20px;">0.00</div>
<div class="r " style="left:1081px;top:770px;width:124px;height:20px;line-height:20px;">0.00</div>
<div class="r " style="left:1209px;top:770px;width:279px;height:20px;line-height:20px;">2021.05.11 09:12:27</div>
<div class="r " style="left:1492px;top:770px;width:124px;height:20px;line-height:20px;">13198.12</div>
<div class="r " style="left:1620px;top:770px;width:124px;height:20px;line-height:20px;">0.00</div>
<div class="r " style="left:1748px;top:770px;width:147px;height:20px;line-height:20px;">1 674.60</div>
<div style="left:181px;top:770px;width:1px;height:20px;background:#c4c4c4;"></div>
<div style="left:464px;top:770px;width:1px;height:20px;background:#c4c4c4;"></div>
<div style="left:592px;top:770px;width:1px;height:20px;background:#c4c4c4;"></div>
<div style="left:695px;top:770px;width:1px;height:20px;background:#c4c4c4;"></div>
<div style="left:823px;top:770px;width:1px;height:20px;background:#c4c4c4;"></div>
<div style="left:951px;top:770px;width:1px;height:20px;background:#c4c4c4;"></div>
<div style="left:1079px;top:770px;width:1px;height:20px;background:#c4c4c4;"></div>
<div style="left:1207px;top:770px;width:1px;height:20px;background:#c4c4c4;"></div>
<div style="left:1490px;top:770px;width:1px;height:20px;background:#c4c4c4;"></div>
<div style="left:1618px;top:770px;width:1px;height:20px;background:#c4c4c4;"></div>
<div style="left:1746px;top:770px;width:1px;height:20px;background:#c4c4c4;"></div>
<div style="left:16px;top:791px;width:1883px;height:21px;background:#fff;border-bottom:1px solid #d0d0d0;"></div>
<svg style="left:19px;top:794px;" width="15" height="16" viewBox="0 0 15 16"><path d="M1.5 .5h7l3 3v10.5h-10z" fill="#fff" stroke="#555" stroke-width="1"/><path d="M8.5 .5v3h3" fill="#e8e8e8" stroke="#555" stroke-width="1"/><path d="M2 14.6h10" stroke="#999" stroke-width="1"/><circle cx="10.6" cy="11.6" r="3.1" fill="#f04a18" stroke="#b02a08" stroke-width=".7"/><circle cx="9.8" cy="10.6" r="1.1" fill="#fff" opacity=".45"/></svg>
<div style="left:38px;top:791px;width:140px;height:20px;line-height:20px;">61496301</div>
<div class="r " style="left:183px;top:791px;width:279px;height:20px;line-height:20px;">2021.05.11 09:10:01</div>
<div class="r " style="left:466px;top:791px;width:124px;height:20px;line-height:20px;">sell</div>
<div class="r " style="left:594px;top:791px;width:99px;height:20px;line-height:20px;">10.00</div>
<div class="r " style="left:697px;top:791px;width:124px;height:20px;line-height:20px;">ger30</div>
<div class="r " style="left:825px;top:791px;width:124px;height:20px;line-height:20px;">15186.68</div>
<div class="r " style="left:953px;top:791px;width:124px;height:20px;line-height:20px;">0.00</div>
<div class="r " style="left:1081px;top:791px;width:124px;height:20px;line-height:20px;">0.00</div>
<div class="r " style="left:1209px;top:791px;width:279px;height:20px;line-height:20px;">2021.05.11 09:15:32</div>
<div class="r " style="left:1492px;top:791px;width:124px;height:20px;line-height:20px;">15128.95</div>
<div class="r " style="left:1620px;top:791px;width:124px;height:20px;line-height:20px;">0.00</div>
<div class="r " style="left:1748px;top:791px;width:147px;height:20px;line-height:20px;">697.71</div>
<div style="left:181px;top:791px;width:1px;height:20px;background:#c4c4c4;"></div>
<div style="left:464px;top:791px;width:1px;height:20px;background:#c4c4c4;"></div>
<div style="left:592px;top:791px;width:1px;height:20px;background:#c4c4c4;"></div>
<div style="left:695px;top:791px;width:1px;height:20px;background:#c4c4c4;"></div>
<div style="left:823px;top:791px;width:1px;height:20px;background:#c4c4c4;"></div>
<div style="left:951px;top:791px;width:1px;height:20px;background:#c4c4c4;"></div>
<div style="left:1079px;top:791px;width:1px;height:20px;background:#c4c4c4;"></div>
<div style="left:1207px;top:791px;width:1px;height:20px;background:#c4c4c4;"></div>
<div style="left:1490px;top:791px;width:1px;height:20px;background:#c4c4c4;"></div>
<div style="left:1618px;top:791px;width:1px;height:20px;background:#c4c4c4;"></div>
<div style="left:1746px;top:791px;width:1px;height:20px;background:#c4c4c4;"></div>
<div style="left:16px;top:812px;width:1883px;height:21px;background:#ebebeb;border-bottom:1px solid #d0d0d0;"></div>
<svg style="left:19px;top:815px;" width="15" height="16" viewBox="0 0 15 16"><path d="M1.5 .5h7l3 3v10.5h-10z" fill="#fff" stroke="#555" stroke-width="1"/><path d="M8.5 .5v3h3" fill="#e8e8e8" stroke="#555" stroke-width="1"/><path d="M2 14.6h10" stroke="#999" stroke-width="1"/><circle cx="10.6" cy="11.6" r="3.1" fill="#f04a18" stroke="#b02a08" stroke-width=".7"/><circle cx="9.8" cy="10.6" r="1.1" fill="#fff" opacity=".45"/></svg>
<div style="left:38px;top:812px;width:140px;height:20px;line-height:20px;">61497854</div>
<div class="r " style="left:183px;top:812px;width:279px;height:20px;line-height:20px;">2021.05.11 09:30:45</div>
<div class="r " style="left:466px;top:812px;width:124px;height:20px;line-height:20px;">sell</div>
<div class="r " style="left:594px;top:812px;width:99px;height:20px;line-height:20px;">30.00</div>
<div class="r " style="left:697px;top:812px;width:124px;height:20px;line-height:20px;">usatec</div>
<div class="r " style="left:825px;top:812px;width:124px;height:20px;line-height:20px;">13195.41</div>
<div class="r " style="left:953px;top:812px;width:124px;height:20px;line-height:20px;">0.00</div>
<div class="r " style="left:1081px;top:812px;width:124px;height:20px;line-height:20px;">0.00</div>
<div class="r " style="left:1209px;top:812px;width:279px;height:20px;line-height:20px;">2021.05.11 09:37:06</div>
<div class="r " style="left:1492px;top:812px;width:124px;height:20px;line-height:20px;">13197.17</div>
<div class="r " style="left:1620px;top:812px;width:124px;height:20px;line-height:20px;">0.00</div>
<div class="r " style="left:1748px;top:812px;width:147px;height:20px;line-height:20px;">-52.80</div>
<div style="left:181px;top:812px;width:1px;height:20px;background:#c4c4c4;"></div>
<div style="left:464px;top:812px;width:1px;height:20px;background:#c4c4c4;"></div>
<div style="left:592px;top:812px;width:1px;height:20px;background:#c4c4c4;"></div>
<div style="left:695px;top:812px;width:1px;height:20px;background:#c4c4c4;"></div>
<div style="left:823px;top:812px;width:1px;height:20px;background:#c4c4c4;"></div>
<div style="left:951px;top:812px;width:1px;height:20px;background:#c4c4c4;"></div>
<div style="left:1079px;top:812px;width:1px;height:20px;background:#c4c4c4;"></div>
<div style="left:1207px;top:812px;width:1px;height:20px;background:#c4c4c4;"></div>
<div style="left:1490px;top:812px;width:1px;height:20px;background:#c4c4c4;"></div>
<div style="left:1618px;top:812px;width:1px;height:20px;background:#c4c4c4;"></div>
<div style="left:1746px;top:812px;width:1px;height:20px;background:#c4c4c4;"></div>
<div style="left:16px;top:833px;width:1883px;height:21px;background:#fff;border-bottom:1px solid #d0d0d0;"></div>
<svg style="left:19px;top:836px;" width="15" height="16" viewBox="0 0 15 16"><path d="M1.5 .5h7l3 3v10.5h-10z" fill="#fff" stroke="#555" stroke-width="1"/><path d="M8.5 .5v3h3" fill="#e8e8e8" stroke="#555" stroke-width="1"/><path d="M2 14.6h10" stroke="#999" stroke-width="1"/><circle cx="10.6" cy="11.6" r="3.1" fill="#f04a18" stroke="#b02a08" stroke-width=".7"/><circle cx="9.8" cy="10.6" r="1.1" fill="#fff" opacity=".45"/></svg>
<div style="left:38px;top:833px;width:140px;height:20px;line-height:20px;">61498771</div>
<div class="r " style="left:183px;top:833px;width:279px;height:20px;line-height:20px;">2021.05.11 09:45:02</div>
<div class="r " style="left:466px;top:833px;width:124px;height:20px;line-height:20px;">sell</div>
<div class="r " style="left:594px;top:833px;width:99px;height:20px;line-height:20px;">30.00</div>
<div class="r " style="left:697px;top:833px;width:124px;height:20px;line-height:20px;">usatec</div>
<div class="r " style="left:825px;top:833px;width:124px;height:20px;line-height:20px;">13183.19</div>
<div class="r " style="left:953px;top:833px;width:124px;height:20px;line-height:20px;">0.00</div>
<div class="r " style="left:1081px;top:833px;width:124px;height:20px;line-height:20px;">0.00</div>
<div class="r " style="left:1209px;top:833px;width:279px;height:20px;line-height:20px;">2021.05.11 09:53:25</div>
<div class="r " style="left:1492px;top:833px;width:124px;height:20px;line-height:20px;">13170.13</div>
<div class="r " style="left:1620px;top:833px;width:124px;height:20px;line-height:20px;">0.00</div>
<div class="r " style="left:1748px;top:833px;width:147px;height:20px;line-height:20px;">391.80</div>
<div style="left:181px;top:833px;width:1px;height:20px;background:#c4c4c4;"></div>
<div style="left:464px;top:833px;width:1px;height:20px;background:#c4c4c4;"></div>
<div style="left:592px;top:833px;width:1px;height:20px;background:#c4c4c4;"></div>
<div style="left:695px;top:833px;width:1px;height:20px;background:#c4c4c4;"></div>
<div style="left:823px;top:833px;width:1px;height:20px;background:#c4c4c4;"></div>
<div style="left:951px;top:833px;width:1px;height:20px;background:#c4c4c4;"></div>
<div style="left:1079px;top:833px;width:1px;height:20px;background:#c4c4c4;"></div>
<div style="left:1207px;top:833px;width:1px;height:20px;background:#c4c4c4;"></div>
<div style="left:1490px;top:833px;width:1px;height:20px;background:#c4c4c4;"></div>
<div style="left:1618px;top:833px;width:1px;height:20px;background:#c4c4c4;"></div>
<div style="left:1746px;top:833px;width:1px;height:20px;background:#c4c4c4;"></div>
<div style="left:16px;top:854px;width:1883px;height:21px;background:#ebebeb;border-bottom:1px solid #d0d0d0;"></div>
<svg style="left:19px;top:857px;" width="15" height="16" viewBox="0 0 15 16"><path d="M1.5 .5h7l3 3v10.5h-10z" fill="#fff" stroke="#555" stroke-width="1"/><path d="M8.5 .5v3h3" fill="#e8e8e8" stroke="#555" stroke-width="1"/><path d="M2 14.6h10" stroke="#999" stroke-width="1"/><circle cx="10.6" cy="11.6" r="3.1" fill="#f04a18" stroke="#b02a08" stroke-width=".7"/><circle cx="9.8" cy="10.6" r="1.1" fill="#fff" opacity=".45"/></svg>
<div style="left:38px;top:854px;width:140px;height:20px;line-height:20px;">61499661</div>
<div class="r " style="left:183px;top:854px;width:279px;height:20px;line-height:20px;">2021.05.11 09:59:27</div>
<div class="r " style="left:466px;top:854px;width:124px;height:20px;line-height:20px;">sell</div>
<div class="r " style="left:594px;top:854px;width:99px;height:20px;line-height:20px;">30.00</div>
<div class="r " style="left:697px;top:854px;width:124px;height:20px;line-height:20px;">usatec</div>
<div class="r " style="left:825px;top:854px;width:124px;height:20px;line-height:20px;">13203.16</div>
<div class="r " style="left:953px;top:854px;width:124px;height:20px;line-height:20px;">0.00</div>
<div class="r " style="left:1081px;top:854px;width:124px;height:20px;line-height:20px;">0.00</div>
<div class="r " style="left:1209px;top:854px;width:279px;height:20px;line-height:20px;">2021.05.11 10:18:03</div>
<div class="r " style="left:1492px;top:854px;width:124px;height:20px;line-height:20px;">13176.62</div>
<div class="r " style="left:1620px;top:854px;width:124px;height:20px;line-height:20px;">0.00</div>
<div class="r " style="left:1748px;top:854px;width:147px;height:20px;line-height:20px;">796.20</div>
<div style="left:181px;top:854px;width:1px;height:20px;background:#c4c4c4;"></div>
<div style="left:464px;top:854px;width:1px;height:20px;background:#c4c4c4;"></div>
<div style="left:592px;top:854px;width:1px;height:20px;background:#c4c4c4;"></div>
<div style="left:695px;top:854px;width:1px;height:20px;background:#c4c4c4;"></div>
<div style="left:823px;top:854px;width:1px;height:20px;background:#c4c4c4;"></div>
<div style="left:951px;top:854px;width:1px;height:20px;background:#c4c4c4;"></div>
<div style="left:1079px;top:854px;width:1px;height:20px;background:#c4c4c4;"></div>
<div style="left:1207px;top:854px;width:1px;height:20px;background:#c4c4c4;"></div>
<div style="left:1490px;top:854px;width:1px;height:20px;background:#c4c4c4;"></div>
<div style="left:1618px;top:854px;width:1px;height:20px;background:#c4c4c4;"></div>
<div style="left:1746px;top:854px;width:1px;height:20px;background:#c4c4c4;"></div>
<div style="left:16px;top:875px;width:1883px;height:21px;background:#fff;border-bottom:1px solid #d0d0d0;"></div>
<svg style="left:19px;top:878px;" width="15" height="16" viewBox="0 0 15 16"><path d="M1.5 .5h7l3 3v10.5h-10z" fill="#fff" stroke="#555" stroke-width="1"/><path d="M8.5 .5v3h3" fill="#e8e8e8" stroke="#555" stroke-width="1"/><path d="M2 14.6h10" stroke="#999" stroke-width="1"/><circle cx="10.6" cy="11.6" r="3.1" fill="#f04a18" stroke="#b02a08" stroke-width=".7"/><circle cx="9.8" cy="10.6" r="1.1" fill="#fff" opacity=".45"/></svg>
<div style="left:38px;top:875px;width:140px;height:20px;line-height:20px;">61500080</div>
<div class="r " style="left:183px;top:875px;width:279px;height:20px;line-height:20px;">2021.05.11 10:04:20</div>
<div class="r " style="left:466px;top:875px;width:124px;height:20px;line-height:20px;">sell</div>
<div class="r " style="left:594px;top:875px;width:99px;height:20px;line-height:20px;">10.00</div>
<div class="r " style="left:697px;top:875px;width:124px;height:20px;line-height:20px;">ger30</div>
<div class="r " style="left:825px;top:875px;width:124px;height:20px;line-height:20px;">15104.18</div>
<div class="r " style="left:953px;top:875px;width:124px;height:20px;line-height:20px;">0.00</div>
<div class="r " style="left:1081px;top:875px;width:124px;height:20px;line-height:20px;">0.00</div>
<div class="r " style="left:1209px;top:875px;width:279px;height:20px;line-height:20px;">2021.05.11 10:17:38</div>
<div class="r " style="left:1492px;top:875px;width:124px;height:20px;line-height:20px;">15071.74</div>
<div class="r " style="left:1620px;top:875px;width:124px;height:20px;line-height:20px;">0.00</div>
<div class="r " style="left:1748px;top:875px;width:147px;height:20px;line-height:20px;">392.85</div>
<div style="left:181px;top:875px;width:1px;height:20px;background:#c4c4c4;"></div>
<div style="left:464px;top:875px;width:1px;height:20px;background:#c4c4c4;"></div>
<div style="left:592px;top:875px;width:1px;height:20px;background:#c4c4c4;"></div>
<div style="left:695px;top:875px;width:1px;height:20px;background:#c4c4c4;"></div>
<div style="left:823px;top:875px;width:1px;height:20px;background:#c4c4c4;"></div>
<div style="left:951px;top:875px;width:1px;height:20px;background:#c4c4c4;"></div>
<div style="left:1079px;top:875px;width:1px;height:20px;background:#c4c4c4;"></div>
<div style="left:1207px;top:875px;width:1px;height:20px;background:#c4c4c4;"></div>
<div style="left:1490px;top:875px;width:1px;height:20px;background:#c4c4c4;"></div>
<div style="left:1618px;top:875px;width:1px;height:20px;background:#c4c4c4;"></div>
<div style="left:1746px;top:875px;width:1px;height:20px;background:#c4c4c4;"></div>
<div style="left:16px;top:896px;width:1883px;height:21px;background:#ebebeb;border-bottom:1px solid #d0d0d0;"></div>
<svg style="left:19px;top:899px;" width="15" height="16" viewBox="0 0 15 16"><path d="M1.5 .5h7l3 3v10.5h-10z" fill="#fff" stroke="#555" stroke-width="1"/><path d="M8.5 .5v3h3" fill="#e8e8e8" stroke="#555" stroke-width="1"/><path d="M2 14.6h10" stroke="#999" stroke-width="1"/><circle cx="10.6" cy="11.6" r="3.1" fill="#1e90e8" stroke="#0b5fb0" stroke-width=".7"/><circle cx="9.8" cy="10.6" r="1.1" fill="#fff" opacity=".45"/></svg>
<div style="left:38px;top:896px;width:140px;height:20px;line-height:20px;">61500994</div>
<div class="r " style="left:183px;top:896px;width:279px;height:20px;line-height:20px;">2021.05.11 10:20:58</div>
<div class="r " style="left:466px;top:896px;width:124px;height:20px;line-height:20px;">buy</div>
<div class="r " style="left:594px;top:896px;width:99px;height:20px;line-height:20px;">5.00</div>
<div class="r " style="left:697px;top:896px;width:124px;height:20px;line-height:20px;">usaind</div>
<div class="r " style="left:825px;top:896px;width:124px;height:20px;line-height:20px;">34548.37</div>
<div class="r " style="left:953px;top:896px;width:124px;height:20px;line-height:20px;">0.00</div>
<div class="r " style="left:1081px;top:896px;width:124px;height:20px;line-height:20px;">0.00</div>
<div class="r " style="left:1209px;top:896px;width:279px;height:20px;line-height:20px;">2021.05.11 10:28:03</div>
<div class="r " style="left:1492px;top:896px;width:124px;height:20px;line-height:20px;">34582.38</div>
<div class="r " style="left:1620px;top:896px;width:124px;height:20px;line-height:20px;">0.00</div>
<div class="r " style="left:1748px;top:896px;width:147px;height:20px;line-height:20px;">170.05</div>
<div style="left:181px;top:896px;width:1px;height:20px;background:#c4c4c4;"></div>
<div style="left:464px;top:896px;width:1px;height:20px;background:#c4c4c4;"></div>
<div style="left:592px;top:896px;width:1px;height:20px;background:#c4c4c4;"></div>
<div style="left:695px;top:896px;width:1px;height:20px;background:#c4c4c4;"></div>
<div style="left:823px;top:896px;width:1px;height:20px;background:#c4c4c4;"></div>
<div style="left:951px;top:896px;width:1px;height:20px;background:#c4c4c4;"></div>
<div style="left:1079px;top:896px;width:1px;height:20px;background:#c4c4c4;"></div>
<div style="left:1207px;top:896px;width:1px;height:20px;background:#c4c4c4;"></div>
<div style="left:1490px;top:896px;width:1px;height:20px;background:#c4c4c4;"></div>
<div style="left:1618px;top:896px;width:1px;height:20px;background:#c4c4c4;"></div>
<div style="left:1746px;top:896px;width:1px;height:20px;background:#c4c4c4;"></div>
<div style="left:16px;top:917px;width:1883px;height:21px;background:#fff;border-bottom:1px solid #d0d0d0;"></div>
<svg style="left:19px;top:920px;" width="15" height="16" viewBox="0 0 15 16"><path d="M1.5 .5h7l3 3v10.5h-10z" fill="#fff" stroke="#555" stroke-width="1"/><path d="M8.5 .5v3h3" fill="#e8e8e8" stroke="#555" stroke-width="1"/><path d="M2 14.6h10" stroke="#999" stroke-width="1"/><circle cx="10.6" cy="11.6" r="3.1" fill="#1e90e8" stroke="#0b5fb0" stroke-width=".7"/><circle cx="9.8" cy="10.6" r="1.1" fill="#fff" opacity=".45"/></svg>
<div style="left:38px;top:917px;width:140px;height:20px;line-height:20px;">61502304</div>
<div class="r " style="left:183px;top:917px;width:279px;height:20px;line-height:20px;">2021.05.11 10:41:26</div>
<div class="r " style="left:466px;top:917px;width:124px;height:20px;line-height:20px;">buy</div>
<div class="r " style="left:594px;top:917px;width:99px;height:20px;line-height:20px;">30.00</div>
<div class="r " style="left:697px;top:917px;width:124px;height:20px;line-height:20px;">usatec</div>
<div class="r " style="left:825px;top:917px;width:124px;height:20px;line-height:20px;">13209.63</div>
<div class="r " style="left:953px;top:917px;width:124px;height:20px;line-height:20px;">0.00</div>
<div class="r " style="left:1081px;top:917px;width:124px;height:20px;line-height:20px;">0.00</div>
<div class="r " style="left:1209px;top:917px;width:279px;height:20px;line-height:20px;">2021.05.11 11:03:14</div>
<div class="r " style="left:1492px;top:917px;width:124px;height:20px;line-height:20px;">13198.93</div>
<div class="r " style="left:1620px;top:917px;width:124px;height:20px;line-height:20px;">0.00</div>
<div class="r " style="left:1748px;top:917px;width:147px;height:20px;line-height:20px;">-321.00</div>
<div style="left:181px;top:917px;width:1px;height:20px;background:#c4c4c4;"></div>
<div style="left:464px;top:917px;width:1px;height:20px;background:#c4c4c4;"></div>
<div style="left:592px;top:917px;width:1px;height:20px;background:#c4c4c4;"></div>
<div style="left:695px;top:917px;width:1px;height:20px;background:#c4c4c4;"></div>
<div style="left:823px;top:917px;width:1px;height:20px;background:#c4c4c4;"></div>
<div style="left:951px;top:917px;width:1px;height:20px;background:#c4c4c4;"></div>
<div style="left:1079px;top:917px;width:1px;height:20px;background:#c4c4c4;"></div>
<div style="left:1207px;top:917px;width:1px;height:20px;background:#c4c4c4;"></div>
<div style="left:1490px;top:917px;width:1px;height:20px;background:#c4c4c4;"></div>
<div style="left:1618px;top:917px;width:1px;height:20px;background:#c4c4c4;"></div>
<div style="left:1746px;top:917px;width:1px;height:20px;background:#c4c4c4;"></div>
<div style="left:16px;top:938px;width:1883px;height:21px;background:#0078d7;border-bottom:1px solid #0078d7;"></div>
<svg style="left:20px;top:942px;" width="12" height="15" viewBox="0 0 12 15"><rect x=".5" y=".5" width="9.5" height="12.5" fill="#fff" stroke="#888" stroke-width="1"/><path d="M10.8 1.500v12.300M1.500 13.800h9.300" stroke="#aaa" stroke-width="1" fill="none"/><path d="M3.700 3h3.200v3h1.900l-3.500 4-3.500-4h1.900z" fill="#e8300c" stroke="#a81c04" stroke-width=".6"/></svg>
<div class="w" style="left:38px;top:938px;width:140px;height:20px;line-height:20px;">61566684</div>
<div class="r w" style="left:183px;top:938px;width:279px;height:20px;line-height:20px;">2021.05.12 14:40:50</div>
<div class="r w" style="left:466px;top:938px;width:124px;height:20px;line-height:20px;">balance</div>
<div class="r w" style="left:1300px;top:938px;width:445px;height:20px;line-height:20px;">5977052 ADJ GWILL Termination n</div>
<div class="r w" style="left:1750px;top:938px;width:145px;height:20px;line-height:20px;">-8 904.71</div>
<div style="left:181px;top:938px;width:1px;height:20px;background:#b8d4ee;"></div>
<div style="left:464px;top:938px;width:1px;height:20px;background:#b8d4ee;"></div>
<div style="left:592px;top:938px;width:1px;height:20px;background:#b8d4ee;"></div>
<div style="left:1746px;top:938px;width:1px;height:20px;background:#b8d4ee;"></div>
<div style="left:16px;top:935px;width:1884px;height:26px;border:3px solid #ea3a44;background:transparent;"></div>
<div style="left:1254px;top:893px;width:110px;height:22px;line-height:22px;font-size:19px;color:#f0322d;font-family:"Liberation Serif",serif;">利润被扣除</div>
<div style="left:16px;top:961px;width:1883px;height:18px;background:#c8c8c8;"></div>
<div style="left:1899px;top:958px;width:16px;height:21px;background:#cdcdcd;"></div>
<svg style="left:22px;top:965px;" width="9" height="9" viewBox="0 0 9 9"><circle cx="4.5" cy="4.5" r="3.3" fill="#dcdcdc" stroke="#8a8a8a" stroke-width="1"/><circle cx="3.8" cy="3.8" r="1.3" fill="#f4f4f4"/></svg>
<div style="left:38px;top:959px;width:36px;height:21px;line-height:21px;font-weight:bold;">盈/亏:</div>
<div style="left:75px;top:959px;width:56px;height:21px;line-height:21px;font-weight:bold;">8 970.96</div>
<div style="left:132px;top:959px;width:42px;height:21px;line-height:21px;font-weight:bold;">信用额:</div>
<div style="left:175px;top:959px;width:30px;height:21px;line-height:21px;font-weight:bold;">0.00</div>
<div style="left:207px;top:959px;width:30px;height:21px;line-height:21px;font-weight:bold;">存款:</div>
<div style="left:238.5px;top:959px;width:62px;height:21px;line-height:21px;font-weight:bold;">12 232.14</div>
<div style="left:302px;top:959px;width:30px;height:21px;line-height:21px;font-weight:bold;">取款:</div>
<div style="left:333.3px;top:959px;width:62px;height:21px;line-height:21px;font-weight:bold;">-8 970.96</div>
<div class="r" style="left:1750px;top:959px;width:145px;height:21px;line-height:21px;font-weight:bold;">12 232.14</div>
<div style="left:1899px;top:283px;width:17px;height:705px;background:#f0f0f0;"></div>
<svg style="left:1903px;top:290px;" width="9" height="6" viewBox="0 0 9 6"><path d="M.8 5l3.7-3.8L8.2 5" fill="none" stroke="#555" stroke-width="1.6"/></svg>
<svg style="left:1903px;top:977px;" width="9" height="6" viewBox="0 0 9 6"><path d="M.8 1l3.7 3.8L8.2 1" fill="none" stroke="#555" stroke-width="1.6"/></svg>
<div style="left:1899px;top:958px;width:16px;height:13px;background:#cdcdcd;"></div>
<div style="left:1917px;top:282px;width:1px;height:707px;background:#f0f0f0;"></div>
<div style="left:15px;top:989px;width:1901px;height:1px;background:#000;"></div>
<div style="left:15px;top:990px;width:1903px;height:24px;background:#f0f0f0;border-left:1px solid #a0a0a0;"></div>
<div style="left:1px;top:987px;width:13px;height:13px;line-height:13px;font-size:12px;transform:rotate(-90deg);text-align:center;">端</div>
<div style="left:1px;top:999px;width:13px;height:13px;line-height:13px;font-size:12px;transform:rotate(-90deg);text-align:center;">终</div>
<div style="left:28px;top:990px;width:60px;height:21px;line-height:21px;font-size:12px;color:#7d7d7d;">交易</div>
<div style="left:62px;top:993px;width:1px;height:16px;background:#808080;"></div>
<div style="left:72px;top:990px;width:60px;height:21px;line-height:21px;font-size:12px;color:#7d7d7d;">展示</div>
<div style="left:183px;top:990px;width:60px;height:21px;line-height:21px;font-size:12px;color:#7d7d7d;">新闻</div>
<div style="left:232px;top:993px;width:1px;height:16px;background:#808080;"></div>
<div style="left:241px;top:990px;width:60px;height:21px;line-height:21px;font-size:12px;color:#7d7d7d;">警报</div>
<div style="left:276px;top:993px;width:1px;height:16px;background:#808080;"></div>
<div style="left:286px;top:990px;width:60px;height:21px;line-height:21px;font-size:12px;color:#7d7d7d;">邮箱</div>
<div style="left:328px;top:993px;width:1px;height:16px;background:#808080;"></div>
<div style="left:337px;top:990px;width:60px;height:21px;line-height:21px;font-size:12px;color:#7d7d7d;">市场</div>
<div style="left:392px;top:993px;width:1px;height:16px;background:#808080;"></div>
<div style="left:402px;top:990px;width:60px;height:21px;line-height:21px;font-size:12px;color:#7d7d7d;">信号</div>
<div style="left:435px;top:993px;width:1px;height:16px;background:#808080;"></div>
<div style="left:446px;top:990px;width:60px;height:21px;line-height:21px;font-size:12px;color:#7d7d7d;">文章</div>
<div style="left:480px;top:993px;width:1px;height:16px;background:#808080;"></div>
<div style="left:490px;top:990px;width:60px;height:21px;line-height:21px;font-size:12px;color:#7d7d7d;">代码库</div>
<div style="left:536px;top:993px;width:1px;height:16px;background:#808080;"></div>
<div style="left:546px;top:990px;width:60px;height:21px;line-height:21px;font-size:12px;color:#7d7d7d;">EA</div>
<div style="left:571px;top:993px;width:1px;height:16px;background:#808080;"></div>
<div style="left:581px;top:990px;width:60px;height:21px;line-height:21px;font-size:12px;color:#7d7d7d;">日志</div>
<div style="left:615px;top:993px;width:1px;height:16px;background:#808080;"></div>
<div style="left:210px;top:997px;width:30px;height:14px;line-height:14px;font-size:9.500px;font-weight:bold;color:#f03040;">84</div>
<div style="left:312px;top:997px;width:30px;height:14px;line-height:14px;font-size:9.500px;font-weight:bold;color:#f03040;">6</div>
<div style="left:364px;top:997px;width:30px;height:14px;line-height:14px;font-size:9.500px;font-weight:bold;color:#f03040;">165</div>
<div style="left:106px;top:990px;width:68px;height:21px;background:#fff;border:1px solid #000;border-top:none;box-shadow:1px 1px 0 #000;"></div>
<div style="left:106px;top:990px;width:68px;height:20px;line-height:20px;font-size:12px;text-align:center;">账户历史</div>
<div style="left:0px;top:1015px;width:1919px;height:1px;background:#a0a0a0;"></div>
<div style="left:0px;top:1016px;width:1919px;height:1px;background:#fff;"></div>
<div style="left:0px;top:1017px;width:1919px;height:23px;background:#f0f0f0;"></div>
<div style="left:2px;top:1018px;width:52px;height:22px;line-height:22px;font-size:12px;">寻求帮助,</div>
<div style="left:54px;top:1018px;width:24px;height:22px;line-height:22px;font-size:12px;">请按</div>
<div style="left:78px;top:1018px;width:14px;height:22px;line-height:22px;font-size:12px;">F1</div>
<div style="left:91px;top:1018px;width:13px;height:22px;line-height:22px;font-size:12px;">键</div>
<div style="left:1130px;top:1019px;width:100px;height:22px;line-height:22px;font-size:13px;">Default</div>
<div style="left:1124px;top:1020px;width:1px;height:18px;background:#a0a0a0;"></div>
<div style="left:1259px;top:1020px;width:1px;height:18px;background:#a0a0a0;"></div>
<div style="left:1376px;top:1020px;width:1px;height:18px;background:#a0a0a0;"></div>
<div style="left:1458px;top:1020px;width:1px;height:18px;background:#a0a0a0;"></div>
<div style="left:1539px;top:1020px;width:1px;height:18px;background:#a0a0a0;"></div>
<div style="left:1617px;top:1020px;width:1px;height:18px;background:#a0a0a0;"></div>
<div style="left:1697px;top:1020px;width:1px;height:18px;background:#a0a0a0;"></div>
<div style="left:1775px;top:1020px;width:1px;height:18px;background:#a0a0a0;"></div>
<svg style="left:1781px;top:1023px;" width="24" height="13" viewBox="0 0 24 13"><rect x="0.00" y="0" width="1.700" height="10.00" fill="#5c7c12"/><rect x="0.00" y="11.00" width="1.700" height="2.00" fill="#0c3054"/><rect x="2.60" y="0" width="1.700" height="8.75" fill="#5c7c12"/><rect x="2.60" y="9.75" width="1.700" height="3.25" fill="#0c3054"/><rect x="5.20" y="0" width="1.700" height="7.50" fill="#5c7c12"/><rect x="5.20" y="8.50" width="1.700" height="4.50" fill="#0c3054"/><rect x="7.80" y="0" width="1.700" height="6.25" fill="#5c7c12"/><rect x="7.80" y="7.25" width="1.700" height="5.75" fill="#0c3054"/><rect x="10.40" y="0" width="1.700" height="5.00" fill="#5c7c12"/><rect x="10.40" y="6.00" width="1.700" height="7.00" fill="#0c3054"/><rect x="13.00" y="0" width="1.700" height="3.75" fill="#5c7c12"/><rect x="13.00" y="4.75" width="1.700" height="8.25" fill="#0c3054"/><rect x="15.60" y="0" width="1.700" height="2.50" fill="#5c7c12"/><rect x="15.60" y="3.50" width="1.700" height="9.50" fill="#0c3054"/><rect x="18.20" y="0" width="1.700" height="1.25" fill="#5c7c12"/><rect x="18.20" y="2.25" width="1.700" height="10.75" fill="#0c3054"/><rect x="20.80" y="1.00" width="1.700" height="12.00" fill="#0c3054"/></svg>
<div style="left:1808.5px;top:1019px;width:80px;height:22px;line-height:22px;font-size:13px;">603/2 kb</div>
<div style="left:0px;top:1040px;width:1928px;height:8px;background:#0c0c0c;"></div>
<div style="left:1868px;top:1044.5px;width:40px;height:14px;line-height:14px;font-size:12.500px;color:#fff;">17:11</div>
<svg style="left:0px;top:0px;pointer-events:none;" width="800" height="900" viewBox="0 0 800 900"><g fill="#000" fill-opacity=".037"><path d="M140 476L130 470L100 440L86 420L82 400L96 360L108 335L121 315L129 290L135 270L164 257L175 250L338 248L350 238L386 231L458 229L517 219L540 216L540 259L618 259L645 283L700 326L742 351L763 366L776 398L769 448L761 498L752 540L745 525L720 505L699 490L682 485L653 465L632 422L523 372L238 375L186 395L160 415L138 435L134 455z"/><path d="M108 612L250 598L330 585L463 578L463 718L468 722L471 708L482 687L493 660L501 633L501 580L497 543L483 501L464 475L464 405L560 395L592 422L638 465L682 501L701 543L716 585L697 627L674 660L651 690L632 710L607 735L530 759L509 780L477 802L461 820L418 842L385 860L380 842L389 820L405 802L429 780L400 765L343 775L325 790L315 785L280 760L250 735L225 715L195 690L165 665L130 640z"/><path d="M386 115L405 131L434 143L458 155L494 174L517 183L518 183L518 115z"/></g></svg>
<div style="left:1919px;top:0px;width:9px;height:1040px;background:#fff;"></div>
<div style="left:1918px;top:23px;width:1px;height:1017px;background:#f0f0f0;"></div>
<div style="left:1921px;top:8px;width:7px;height:5px;background:#f8b020;border-radius:3px;"></div>
<div style="left:1919px;top:13px;width:9px;height:9px;background:#7a5ae0;border-radius:3px 3px 0 0;"></div>
<div style="left:1919px;top:36px;width:9px;height:1px;background:#c8c8c8;"></div>
<div style="left:1922px;top:36px;width:1px;height:8px;background:#c8c8c8;"></div>
<div style="left:1919px;top:70px;width:9px;height:1px;background:#7a9ad0;"></div>
<div style="left:1919px;top:86px;width:9px;height:1px;background:#e0e0e0;"></div>
<div style="left:1920px;top:88px;width:8px;height:8px;background:#eef3fb;"></div>
<div style="left:1919px;top:97px;width:9px;height:1px;background:#c0c0c0;"></div>
<div style="left:1921px;top:105px;width:7px;height:28px;background:repeating-linear-gradient(#fff 0 3px,#ddd 3px 4px);"></div>
<div style="left:1920px;top:139px;width:8px;height:6px;background:#3a3a3a;"></div>
<div style="left:1920px;top:145px;width:8px;height:20px;background:#e0504a;border-radius:4px 0 0 0;"></div>
<div style="left:1920px;top:165px;width:8px;height:2px;background:#b8b0a8;"></div>
<div style="left:1919px;top:219px;width:9px;height:1px;background:#d8d8d8;"></div>
<div style="left:1919px;top:720px;width:9px;height:320px;background:#f0f0f0;"></div>
<div style="left:1919px;top:732px;width:9px;height:1px;background:#fff;"></div>
<div style="left:1921px;top:735px;width:7px;height:3px;background:#4a4a4a;"></div>
<div style="left:1921px;top:738px;width:7px;height:2px;background:#5a7ad0;"></div>
<div style="left:1921px;top:757px;width:7px;height:1px;background:#8aaae0;"></div>
<div style="left:1919px;top:1010px;width:9px;height:30px;background:#fff;"></div>
<div style="left:1922px;top:1013px;width:6px;height:14px;border:1px solid #3a6ad0;border-right:none;background:#fff;"></div>
</body></html>
